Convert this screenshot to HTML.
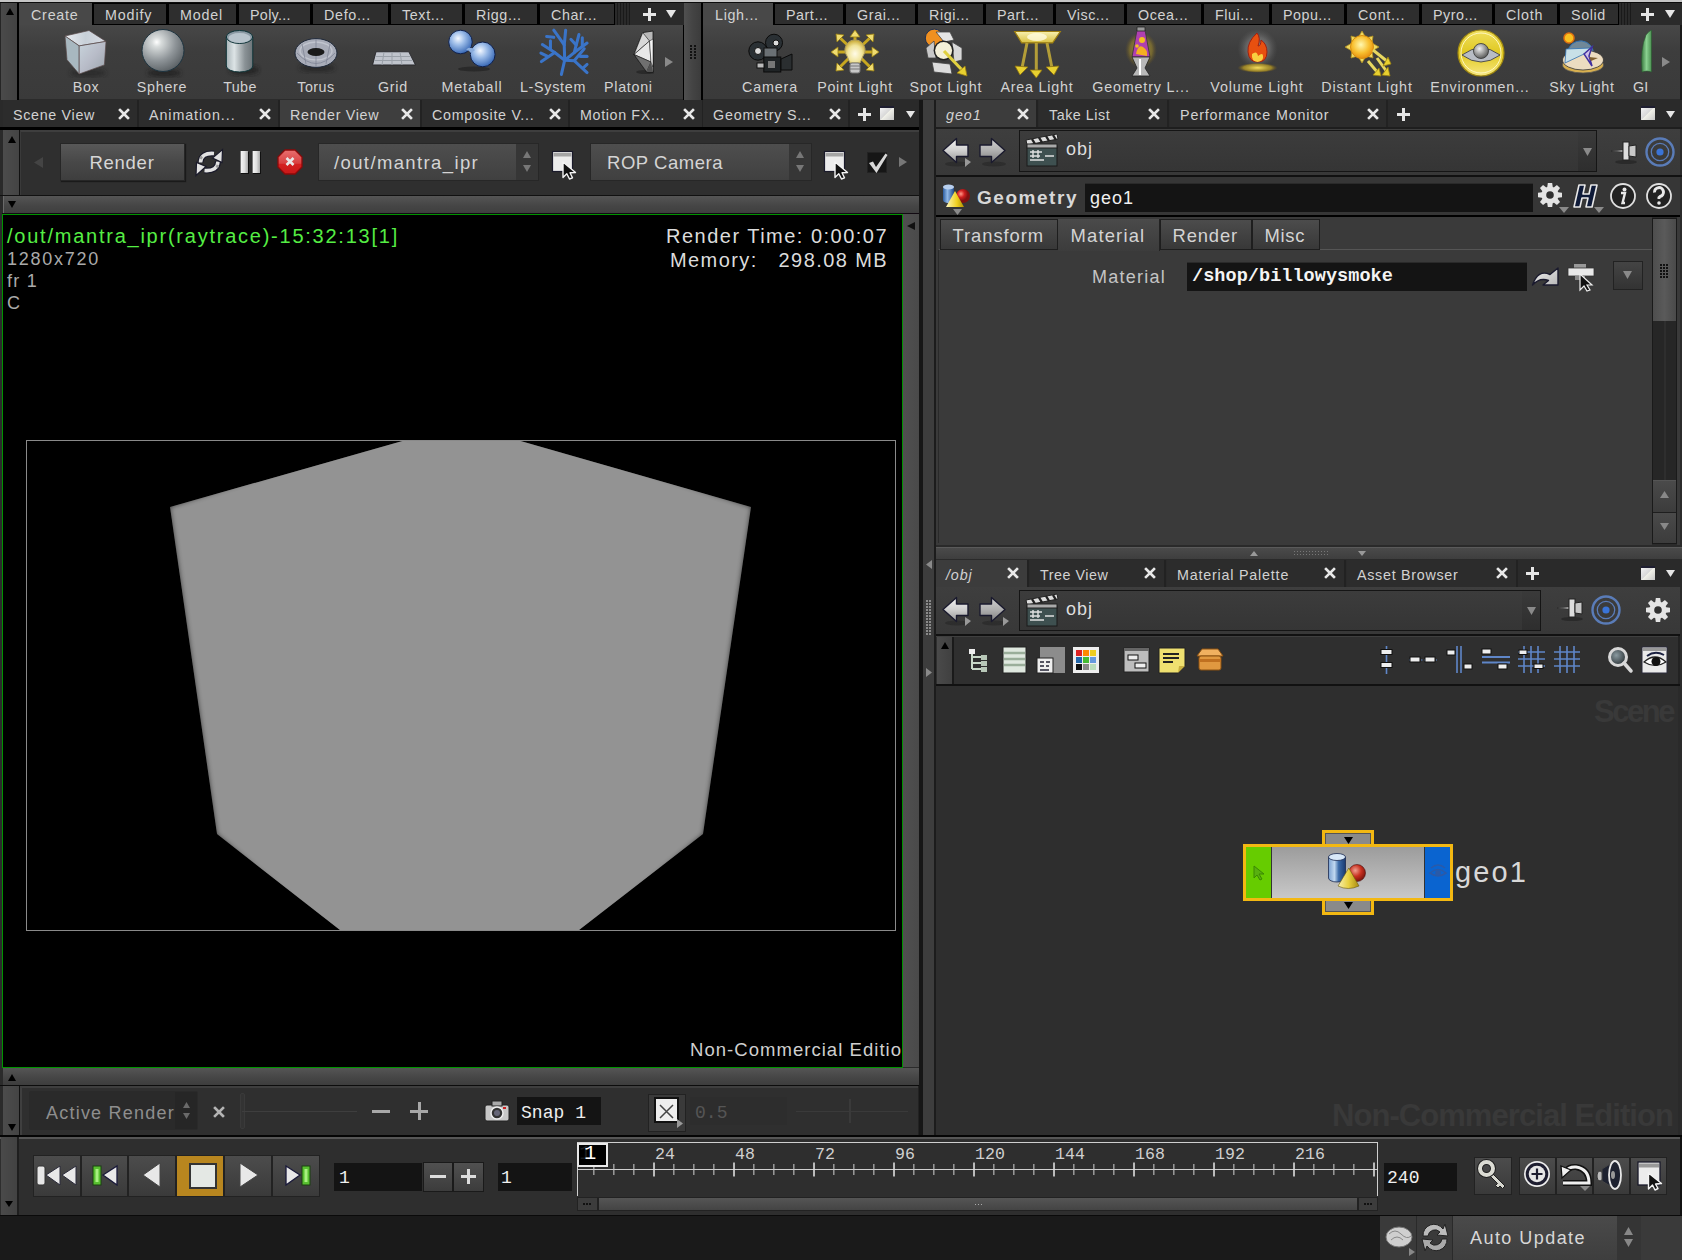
<!DOCTYPE html>
<html><head><meta charset="utf-8"><style>
*{box-sizing:border-box}
html,body{margin:0;padding:0}
body{width:1682px;height:1260px;background:#2b2b2b;position:relative;overflow:hidden;font-family:"Liberation Sans",sans-serif;color:#d2d2d2}
.a{position:absolute}
.t{position:absolute;white-space:nowrap;line-height:1;letter-spacing:0.055em}
</style></head><body>
<div class="a" style="left:0px;top:0px;width:1682px;height:2px;background:#c6c6c6"></div>
<div class="a" style="left:0px;top:2px;width:1682px;height:1px;background:#0c0c0c"></div>
<div class="a" style="left:0px;top:3px;width:1px;height:97px;background:#262626"></div>
<div class="a" style="left:1px;top:3px;width:16px;height:97px;background:linear-gradient(90deg,#4a4a4a,#424242)"></div>
<svg class="a" style="left:6px;top:8px;" width="8" height="7" viewBox="0 0 8 7"><polygon points="0,7 8,7 4.0,0" fill="#000"/></svg>
<div class="a" style="left:17px;top:3px;width:2px;height:97px;background:#000"></div>
<div class="a" style="left:19px;top:3px;width:665px;height:22px;background:#2a2a2a"></div>
<div class="a" style="left:19px;top:25px;width:665px;height:74px;background:linear-gradient(#474747,#3d3d3d 35%,#3a3a3a)"></div>
<div class="a" style="left:19px;top:3px;width:73px;height:22px;background:#484848"></div>
<div class="t" style="left:31px;top:7.9px;font-size:14.3px;color:#d2d2d2;letter-spacing:0.77px;">Create</div>
<div class="a" style="left:92px;top:3px;width:75px;height:22px;background:#2e2e2e;border:1px solid #000;border-left:2px solid #000"></div>
<div class="t" style="left:105px;top:7.9px;font-size:14.3px;color:#d2d2d2;letter-spacing:0.88px;">Modify</div>
<div class="a" style="left:167px;top:3px;width:70px;height:22px;background:#2e2e2e;border:1px solid #000;border-left:2px solid #000"></div>
<div class="t" style="left:180px;top:7.9px;font-size:14.3px;color:#d2d2d2;letter-spacing:0.79px;">Model</div>
<div class="a" style="left:237px;top:3px;width:74px;height:22px;background:#2e2e2e;border:1px solid #000;border-left:2px solid #000"></div>
<div class="t" style="left:250px;top:7.9px;font-size:14.3px;color:#d2d2d2;letter-spacing:0.32px;">Poly...</div>
<div class="a" style="left:311px;top:3px;width:78px;height:22px;background:#2e2e2e;border:1px solid #000;border-left:2px solid #000"></div>
<div class="t" style="left:324px;top:7.9px;font-size:14.3px;color:#d2d2d2;letter-spacing:0.69px;">Defo...</div>
<div class="a" style="left:389px;top:3px;width:74px;height:22px;background:#2e2e2e;border:1px solid #000;border-left:2px solid #000"></div>
<div class="t" style="left:402px;top:7.9px;font-size:14.3px;color:#d2d2d2;letter-spacing:0.63px;">Text...</div>
<div class="a" style="left:463px;top:3px;width:75px;height:22px;background:#2e2e2e;border:1px solid #000;border-left:2px solid #000"></div>
<div class="t" style="left:476px;top:7.9px;font-size:14.3px;color:#d2d2d2;letter-spacing:0.62px;">Rigg...</div>
<div class="a" style="left:538px;top:3px;width:77px;height:22px;background:#2e2e2e;border:1px solid #000;border-left:2px solid #000"></div>
<div class="t" style="left:551px;top:7.9px;font-size:14.3px;color:#d2d2d2;letter-spacing:0.56px;">Char...</div>
<div class="a" style="left:617px;top:3px;width:1px;height:22px;background:#1a1a1a"></div>
<div class="a" style="left:620px;top:3px;width:1px;height:22px;background:#1a1a1a"></div>
<div class="a" style="left:623px;top:3px;width:1px;height:22px;background:#1a1a1a"></div>
<div class="a" style="left:626px;top:3px;width:1px;height:22px;background:#1a1a1a"></div>
<div class="a" style="left:629px;top:3px;width:1px;height:22px;background:#1a1a1a"></div>
<div class="a" style="left:643px;top:13px;width:13px;height:3px;background:#e6e6e6"></div>
<div class="a" style="left:648px;top:8px;width:3px;height:13px;background:#e6e6e6"></div>
<svg class="a" style="left:666px;top:10px;" width="10" height="8" viewBox="0 0 10 8"><polygon points="0,0 10,0 5.0,8" fill="#e6e6e6"/></svg>
<div class="a" style="left:683px;top:25px;width:1px;height:75px;background:#000"></div>
<div class="a" style="left:684px;top:3px;width:17px;height:97px;background:linear-gradient(90deg,#505050,#444 50%,#3c3c3c)"></div>
<div class="a" style="left:690px;top:45px;width:2px;height:2px;background:#111"></div>
<div class="a" style="left:694px;top:45px;width:2px;height:2px;background:#111"></div>
<div class="a" style="left:690px;top:48px;width:2px;height:2px;background:#111"></div>
<div class="a" style="left:694px;top:48px;width:2px;height:2px;background:#111"></div>
<div class="a" style="left:690px;top:51px;width:2px;height:2px;background:#111"></div>
<div class="a" style="left:694px;top:51px;width:2px;height:2px;background:#111"></div>
<div class="a" style="left:690px;top:54px;width:2px;height:2px;background:#111"></div>
<div class="a" style="left:694px;top:54px;width:2px;height:2px;background:#111"></div>
<div class="a" style="left:690px;top:57px;width:2px;height:2px;background:#111"></div>
<div class="a" style="left:694px;top:57px;width:2px;height:2px;background:#111"></div>
<div class="a" style="left:701px;top:3px;width:2px;height:97px;background:#000"></div>
<svg class="a" style="left:665px;top:57px;" width="8" height="10" viewBox="0 0 8 10"><polygon points="0,0 8,5.0 0,10" fill="#8a8a8a"/></svg>
<div class="a" style="left:703px;top:3px;width:979px;height:22px;background:#2a2a2a"></div>
<div class="a" style="left:703px;top:25px;width:977px;height:74px;background:linear-gradient(#474747,#3d3d3d 35%,#3a3a3a)"></div>
<div class="a" style="left:703px;top:3px;width:70px;height:22px;background:#484848"></div>
<div class="t" style="left:715px;top:7.9px;font-size:14.3px;color:#d2d2d2;letter-spacing:0.68px;">Ligh...</div>
<div class="a" style="left:773px;top:3px;width:71px;height:22px;background:#2e2e2e;border:1px solid #000;border-left:2px solid #000"></div>
<div class="t" style="left:786px;top:7.9px;font-size:14.3px;color:#d2d2d2;letter-spacing:0.54px;">Part...</div>
<div class="a" style="left:844px;top:3px;width:72px;height:22px;background:#2e2e2e;border:1px solid #000;border-left:2px solid #000"></div>
<div class="t" style="left:857px;top:7.9px;font-size:14.3px;color:#d2d2d2;letter-spacing:0.63px;">Grai...</div>
<div class="a" style="left:916px;top:3px;width:68px;height:22px;background:#2e2e2e;border:1px solid #000;border-left:2px solid #000"></div>
<div class="t" style="left:929px;top:7.9px;font-size:14.3px;color:#d2d2d2;letter-spacing:0.58px;">Rigi...</div>
<div class="a" style="left:984px;top:3px;width:70px;height:22px;background:#2e2e2e;border:1px solid #000;border-left:2px solid #000"></div>
<div class="t" style="left:997px;top:7.9px;font-size:14.3px;color:#d2d2d2;letter-spacing:0.54px;">Part...</div>
<div class="a" style="left:1054px;top:3px;width:71px;height:22px;background:#2e2e2e;border:1px solid #000;border-left:2px solid #000"></div>
<div class="t" style="left:1067px;top:7.9px;font-size:14.3px;color:#d2d2d2;letter-spacing:0.53px;">Visc...</div>
<div class="a" style="left:1125px;top:3px;width:77px;height:22px;background:#2e2e2e;border:1px solid #000;border-left:2px solid #000"></div>
<div class="t" style="left:1138px;top:7.9px;font-size:14.3px;color:#d2d2d2;letter-spacing:0.60px;">Ocea...</div>
<div class="a" style="left:1202px;top:3px;width:68px;height:22px;background:#2e2e2e;border:1px solid #000;border-left:2px solid #000"></div>
<div class="t" style="left:1215px;top:7.9px;font-size:14.3px;color:#d2d2d2;letter-spacing:0.56px;">Flui...</div>
<div class="a" style="left:1270px;top:3px;width:75px;height:22px;background:#2e2e2e;border:1px solid #000;border-left:2px solid #000"></div>
<div class="t" style="left:1283px;top:7.9px;font-size:14.3px;color:#d2d2d2;letter-spacing:0.48px;">Popu...</div>
<div class="a" style="left:1345px;top:3px;width:75px;height:22px;background:#2e2e2e;border:1px solid #000;border-left:2px solid #000"></div>
<div class="t" style="left:1358px;top:7.9px;font-size:14.3px;color:#d2d2d2;letter-spacing:0.71px;">Cont...</div>
<div class="a" style="left:1420px;top:3px;width:73px;height:22px;background:#2e2e2e;border:1px solid #000;border-left:2px solid #000"></div>
<div class="t" style="left:1433px;top:7.9px;font-size:14.3px;color:#d2d2d2;letter-spacing:0.50px;">Pyro...</div>
<div class="a" style="left:1493px;top:3px;width:65px;height:22px;background:#2e2e2e;border:1px solid #000;border-left:2px solid #000"></div>
<div class="t" style="left:1506px;top:7.9px;font-size:14.3px;color:#d2d2d2;letter-spacing:0.80px;">Cloth</div>
<div class="a" style="left:1558px;top:3px;width:61px;height:22px;background:#2e2e2e;border:1px solid #000;border-left:2px solid #000"></div>
<div class="t" style="left:1571px;top:7.9px;font-size:14.3px;color:#d2d2d2;letter-spacing:0.61px;">Solid</div>
<div class="a" style="left:1621px;top:3px;width:1px;height:22px;background:#1a1a1a"></div>
<div class="a" style="left:1624px;top:3px;width:1px;height:22px;background:#1a1a1a"></div>
<div class="a" style="left:1627px;top:3px;width:1px;height:22px;background:#1a1a1a"></div>
<div class="a" style="left:1630px;top:3px;width:1px;height:22px;background:#1a1a1a"></div>
<div class="a" style="left:1641px;top:13px;width:13px;height:3px;background:#e6e6e6"></div>
<div class="a" style="left:1646px;top:8px;width:3px;height:13px;background:#e6e6e6"></div>
<svg class="a" style="left:1665px;top:10px;" width="10" height="8" viewBox="0 0 10 8"><polygon points="0,0 10,0 5.0,8" fill="#e6e6e6"/></svg>
<div class="a" style="left:1680px;top:25px;width:2px;height:75px;background:#1a1a1a"></div>
<svg class="a" style="left:1662px;top:57px;" width="8" height="10" viewBox="0 0 8 10"><polygon points="0,0 8,5.0 0,10" fill="#8a8a8a"/></svg>
<div class="t" style="left:-114px;width:400px;text-align:center;top:79.9px;font-size:14.3px;color:#d2d2d2;letter-spacing:0.65px;">Box</div>
<div class="t" style="left:-38px;width:400px;text-align:center;top:79.9px;font-size:14.3px;color:#d2d2d2;letter-spacing:0.71px;">Sphere</div>
<div class="t" style="left:40px;width:400px;text-align:center;top:79.9px;font-size:14.3px;color:#d2d2d2;letter-spacing:0.36px;">Tube</div>
<div class="t" style="left:116px;width:400px;text-align:center;top:79.9px;font-size:14.3px;color:#d2d2d2;letter-spacing:0.49px;">Torus</div>
<div class="t" style="left:193px;width:400px;text-align:center;top:79.9px;font-size:14.3px;color:#d2d2d2;letter-spacing:0.75px;">Grid</div>
<div class="t" style="left:272px;width:400px;text-align:center;top:79.9px;font-size:14.3px;color:#d2d2d2;letter-spacing:0.90px;">Metaball</div>
<div class="t" style="left:353px;width:400px;text-align:center;top:79.9px;font-size:14.3px;color:#d2d2d2;letter-spacing:0.72px;">L-System</div>
<div class="t" style="left:604px;top:79.9px;font-size:14.3px;color:#d2d2d2;letter-spacing:0.72px;">Platoni</div>
<div class="t" style="left:570px;width:400px;text-align:center;top:79.9px;font-size:14.3px;color:#d2d2d2;letter-spacing:0.87px;">Camera</div>
<div class="t" style="left:655px;width:400px;text-align:center;top:79.9px;font-size:14.3px;color:#d2d2d2;letter-spacing:0.74px;">Point Light</div>
<div class="t" style="left:746px;width:400px;text-align:center;top:79.9px;font-size:14.3px;color:#d2d2d2;letter-spacing:0.84px;">Spot Light</div>
<div class="t" style="left:837px;width:400px;text-align:center;top:79.9px;font-size:14.3px;color:#d2d2d2;letter-spacing:0.80px;">Area Light</div>
<div class="t" style="left:941px;width:400px;text-align:center;top:79.9px;font-size:14.3px;color:#d2d2d2;letter-spacing:0.83px;">Geometry L...</div>
<div class="t" style="left:1057px;width:400px;text-align:center;top:79.9px;font-size:14.3px;color:#d2d2d2;letter-spacing:0.89px;">Volume Light</div>
<div class="t" style="left:1167px;width:400px;text-align:center;top:79.9px;font-size:14.3px;color:#d2d2d2;letter-spacing:0.94px;">Distant Light</div>
<div class="t" style="left:1280px;width:400px;text-align:center;top:79.9px;font-size:14.3px;color:#d2d2d2;letter-spacing:0.85px;">Environmen...</div>
<div class="t" style="left:1382px;width:400px;text-align:center;top:79.9px;font-size:14.3px;color:#d2d2d2;letter-spacing:0.75px;">Sky Light</div>
<div class="t" style="left:1633px;top:79.9px;font-size:14.3px;color:#d2d2d2;letter-spacing:0.11px;">GI</div>
<svg width="0" height="0" style="position:absolute"><defs>
<linearGradient id="gBox" x1="0" y1="0" x2="1" y2="1"><stop offset="0" stop-color="#c8d4dc"/><stop offset=".5" stop-color="#b8bcc8"/><stop offset="1" stop-color="#9aa4ac"/></linearGradient>
<linearGradient id="gBoxT" x1="0" y1="0" x2="1" y2="0"><stop offset="0" stop-color="#e8ecf0"/><stop offset=".5" stop-color="#c8d0d8"/><stop offset="1" stop-color="#d8dce4"/></linearGradient>
<radialGradient id="gSph" cx=".35" cy=".3" r=".75"><stop offset="0" stop-color="#ffffff"/><stop offset=".15" stop-color="#d8dcdc"/><stop offset=".6" stop-color="#8e9498"/><stop offset="1" stop-color="#5a6064"/></radialGradient>
<linearGradient id="gTube" x1="0" x2="1"><stop offset="0" stop-color="#a8b4b8"/><stop offset=".3" stop-color="#dde4e6"/><stop offset=".7" stop-color="#8a9296"/><stop offset="1" stop-color="#6c7478"/></linearGradient>
<radialGradient id="gMeta" cx=".4" cy=".35" r=".7"><stop offset="0" stop-color="#f4f8ff"/><stop offset=".4" stop-color="#9cbce8"/><stop offset="1" stop-color="#2e60b0"/></radialGradient>
<radialGradient id="gBulb" cx=".5" cy=".6" r=".6"><stop offset="0" stop-color="#fffbe8"/><stop offset=".6" stop-color="#f0e49a"/><stop offset="1" stop-color="#c8a830"/></radialGradient>
<radialGradient id="gSun" cx=".45" cy=".4" r=".6"><stop offset="0" stop-color="#fff8b0"/><stop offset=".6" stop-color="#f8c030"/><stop offset="1" stop-color="#e89010"/></radialGradient>
<radialGradient id="gGlow" cx=".5" cy=".5" r=".5"><stop offset="0" stop-color="#d0d0d0" stop-opacity=".9"/><stop offset=".6" stop-color="#a0a0a0" stop-opacity=".5"/><stop offset="1" stop-color="#707070" stop-opacity="0"/></radialGradient>
<radialGradient id="gYel" cx=".5" cy=".5" r=".5"><stop offset="0" stop-color="#f8e060"/><stop offset=".7" stop-color="#c0a020" stop-opacity=".7"/><stop offset="1" stop-color="#806010" stop-opacity="0"/></radialGradient>
<linearGradient id="gEnv" x1="0" y1="0" x2="0" y2="1"><stop offset="0" stop-color="#f0e060"/><stop offset=".5" stop-color="#e0c820"/><stop offset="1" stop-color="#f8e880"/></linearGradient>
<radialGradient id="gGray" cx=".4" cy=".35" r=".7"><stop offset="0" stop-color="#f0f0f0"/><stop offset=".5" stop-color="#a0a0a0"/><stop offset="1" stop-color="#505050"/></radialGradient>
<linearGradient id="gArea" x1="0" y1="0" x2="0" y2="1"><stop offset="0" stop-color="#f8f0b0"/><stop offset="1" stop-color="#d8c040"/></linearGradient>
<linearGradient id="gGreen" x1="0" x2="1"><stop offset="0" stop-color="#3a7a40"/><stop offset=".5" stop-color="#8ad090"/><stop offset="1" stop-color="#4a9050"/></linearGradient>
<filter id="fsh" x="-20%" y="-20%" width="140%" height="140%"><feGaussianBlur stdDeviation="2"/></filter>
</defs></svg>
<svg class="a" style="left:60px;top:26px;" width="52" height="52" viewBox="0 0 52 52"><ellipse cx="28" cy="47" rx="18" ry="4" fill="#222" opacity=".6" filter="url(#fsh)"/><polygon points="5,10 29,4.5 46,15.4 19.2,19.9" fill="url(#gBoxT)" stroke="#5a4a4a" stroke-width=".7"/><polygon points="5,10 19.2,19.9 19.2,48 7,33.7" fill="#a8b8c0" stroke="#5a4a4a" stroke-width=".7"/><polygon points="19.2,19.9 46,15.4 44.4,38.9 19.2,48" fill="url(#gBox)" stroke="#5a4a4a" stroke-width=".7"/></svg>
<svg class="a" style="left:138px;top:26px;" width="50" height="52" viewBox="0 0 50 52"><ellipse cx="26" cy="47" rx="17" ry="4" fill="#1e1e1e" opacity=".7" filter="url(#fsh)"/><circle cx="25" cy="24.5" r="21" fill="url(#gSph)" stroke="#1e3440" stroke-width="1"/></svg>
<svg class="a" style="left:222px;top:26px;" width="40" height="52" viewBox="0 0 40 52"><ellipse cx="22" cy="44" rx="15" ry="5" fill="#1e1e1e" opacity=".7" filter="url(#fsh)"/><path d="M4.3 11 L4.3 40 A13.2 6 0 0 0 30.8 40 L30.8 11 Z" fill="url(#gTube)" stroke="#0e3438" stroke-width="1"/><ellipse cx="17.5" cy="11" rx="13.2" ry="6.5" fill="#8c9aa4" stroke="#0e3438" stroke-width="1"/><ellipse cx="17.5" cy="12" rx="11" ry="5" fill="#b8c4cc"/></svg>
<svg class="a" style="left:292px;top:34px;" width="48" height="40" viewBox="0 0 48 40"><ellipse cx="25" cy="34" rx="18" ry="4" fill="#1e1e1e" opacity=".6" filter="url(#fsh)"/><ellipse cx="24" cy="19" rx="21" ry="14.4" fill="#a8acb8" stroke="#1e2838" stroke-width="1"/><ellipse cx="24" cy="17" rx="16" ry="9" fill="none" stroke="#d0d4dc" stroke-width="1.5" opacity=".6"/><path d="M5 19 Q24 40 43 19 M10 10 L14 30 M24 5 L24 33 M38 10 L34 30" stroke="#7a8090" stroke-width=".7" fill="none"/><ellipse cx="24" cy="18" rx="8.5" ry="4" fill="#1a1a1a"/></svg>
<svg class="a" style="left:370px;top:48px;" width="48" height="20" viewBox="0 0 48 20"><polygon points="6,3.8 38.8,3.8 45.4,16.9 2.6,16.9" fill="#c0c4cc" stroke="#1e1e22" stroke-width=".8"/><path d="M5 8.5 H40 M4 12.5 H43 M14 4 L12 17 M22 4 L22 17 M30 4 L32 17" stroke="#9aa0a8" stroke-width="1"/></svg>
<svg class="a" style="left:446px;top:28px;" width="52" height="44" viewBox="0 0 52 44"><ellipse cx="28" cy="41" rx="16" ry="2.5" fill="#1e1e1e" opacity=".6"/><circle cx="14.5" cy="14" r="11.8" fill="url(#gMeta)" stroke="#10204a" stroke-width="1"/><circle cx="36.7" cy="26.4" r="12.4" fill="url(#gMeta)" stroke="#10204a" stroke-width="1"/><path d="M22 20 Q26 19 29 22 L25 25 Q23 22 20 22Z" fill="#8aacdc"/></svg>
<svg class="a" style="left:530px;top:25px;" width="60" height="54" viewBox="0 0 60 54"><g transform="scale(0.0951)" stroke="#3a74c8" stroke-width="32" stroke-linecap="round" fill="none"><path d="M330 520 L365 370 L360 210 L375 55"/><path d="M360 210 L250 55"/><path d="M250 130 L175 120"/><path d="M365 370 L260 290 L130 205"/><path d="M215 250 L215 165"/><path d="M260 290 L120 385"/><path d="M185 330 L115 295"/><path d="M365 370 L465 290 L515 100"/><path d="M485 210 L430 150"/><path d="M465 290 L600 190"/><path d="M550 225 L550 135"/><path d="M365 370 L465 375 L600 500"/><path d="M465 375 L570 250"/><path d="M530 330 L600 330"/><path d="M560 450 L600 415"/></g></svg>
<svg class="a" style="left:632px;top:29px;" width="22" height="46" viewBox="0 0 22 46"><ellipse cx="14" cy="43" rx="10" ry="2" fill="#1e1e1e" opacity=".6"/><polygon points="2,25.5 10.7,3.6 21,2 21,43 14.6,43" fill="#b8b8b8" stroke="#111" stroke-width=".8"/><polygon points="2,25.5 10.7,3.6 17.5,12" fill="#d8d8d8" stroke="#111" stroke-width=".6"/><polygon points="2,25.5 17.5,12 19,33" fill="#e8e8e8" stroke="#111" stroke-width=".6"/><polygon points="2,25.5 19,33 14.6,43" fill="#707070" stroke="#111" stroke-width=".6"/><polygon points="19,33 21,43 14.6,43" fill="#505050"/><polygon points="17.5,12 21,10 21,38 19,33" fill="#f4f4f4" stroke="#111" stroke-width=".5"/></svg>
<svg class="a" style="left:746px;top:32px;" width="50" height="44" viewBox="0 0 50 44"><circle cx="12" cy="19" r="9.2" fill="#2a3034" stroke="#0a0a0a"/><circle cx="12" cy="19" r="3.5" fill="#ddd" stroke="#111"/><circle cx="28" cy="10.7" r="8.5" fill="#2a3034" stroke="#0a0a0a"/><circle cx="30" cy="11" r="3" fill="#ddd" stroke="#111"/><rect x="18" y="16" width="13" height="11" fill="#6a7074" stroke="#111"/><rect x="17.8" y="25" width="17" height="15" fill="#202426" stroke="#0a0a0a"/><rect x="22" y="29" width="7" height="7" fill="#777"/><polygon points="35,27 46,22 46,38 35,38" fill="#2a2e30" stroke="#0a0a0a"/><rect x="11" y="31" width="7" height="5" fill="#bbb" stroke="#111"/></svg>
<svg class="a" style="left:830px;top:29px;" width="50" height="48" viewBox="0 0 50 48"><g stroke="#c8a820" stroke-width="3" fill="#f4e080"><path d="M25 23 V6"/><path d="M25 23 H5"/><path d="M25 23 H45"/><path d="M25 23 L9 8"/><path d="M25 23 L41 8"/><path d="M25 23 L9 39"/><path d="M25 23 L41 39"/></g><g fill="#f0dc70" stroke="#9a8010" stroke-width=".8"><polygon points="25,1 20,8 30,8"/><polygon points="1,23 8,18 8,28"/><polygon points="49,23 42,18 42,28"/><polygon points="6,5 14,6 7,13"/><polygon points="44,5 36,6 43,13"/><polygon points="6,42 7,34 14,41"/><polygon points="44,42 43,34 36,41"/></g><path d="M25 11 A10 10 0 0 1 33 27 L30 34 H20 L17 27 A10 10 0 0 1 25 11Z" fill="url(#gBulb)" stroke="#b0a060" stroke-width="1"/><rect x="20" y="34" width="10" height="10" rx="2" fill="#c8c8c8" stroke="#777"/><path d="M20 37h10M20 40h10" stroke="#777"/></svg>
<svg class="a" style="left:922px;top:28px;" width="48" height="50" viewBox="0 0 48 50"><circle cx="12.3" cy="10.1" r="9" fill="#f09020" stroke="#203050" stroke-width="1"/><polygon points="14,4 28,4 32,12 22,14" fill="#e4e4e4" stroke="#444" stroke-width=".8"/><polygon points="4,20 12,13 14,30 6,30" fill="#c8c8c8" stroke="#444" stroke-width=".8"/><polygon points="30,14 40,20 40,32 32,34" fill="#d8d8d8" stroke="#444" stroke-width=".8"/><polygon points="10,34 28,36 30,46 12,44" fill="#dcdcdc" stroke="#444" stroke-width=".8"/><circle cx="21.6" cy="22.5" r="10" fill="#222"/><circle cx="21.6" cy="22.5" r="8.5" fill="#f4f0d8"/><path d="M22 23 L41 43" stroke="#e0d040" stroke-width="3.2"/><polygon points="45,48 35,45 43,38" fill="#e8d030" stroke="#9a8010" stroke-width=".8"/></svg>
<svg class="a" style="left:1010px;top:28px;" width="56" height="50" viewBox="0 0 56 50"><polygon points="4.7,3.5 50.3,3.5 42.6,14.8 11.7,14.8" fill="url(#gArea)" stroke="#a08010" stroke-width="1.2"/><ellipse cx="27" cy="9" rx="10" ry="4" fill="#fffbe0" opacity=".8"/><g stroke="#c0a838" stroke-width="3" opacity=".9"><path d="M17 15 L12 40"/><path d="M26.3 15 L26.3 44"/><path d="M37 15 L42 40"/></g><g fill="#e8d030" stroke="#8a7010" stroke-width=".8"><polygon points="5,38 18,39 10,47"/><polygon points="20,42 32,42 26.3,50"/><polygon points="36,39 49,38 44,47"/></g></svg>
<svg class="a" style="left:1118px;top:26px;" width="46" height="52" viewBox="0 0 46 52"><ellipse cx="23" cy="24" rx="16" ry="18" fill="url(#gYel)" opacity=".6"/><polygon points="19,4 27,4 32,31 14,31" fill="#b040b0" stroke="#333" stroke-width=".8"/><circle cx="24" cy="14" r="3" fill="#f4c020"/><path d="M18 28 Q20 18 25 21 Q30 24 29 30Z" fill="#f4b020"/><circle cx="19" cy="20" r="1.8" fill="#f4c020"/><polygon points="19,1 27,1 27,5 19,5" fill="#999" stroke="#222" stroke-width=".8"/><polygon points="14,31 32,31 27,42 32,50 14,50 19,42" fill="#b8b8b8" stroke="#222" stroke-width=".8"/><path d="M22 33 L22 49" stroke="#fff" stroke-width="2"/></svg>
<svg class="a" style="left:1235px;top:28px;" width="46" height="46" viewBox="0 0 46 46"><circle cx="22.5" cy="20.8" r="20" fill="url(#gGlow)" opacity=".7"/><ellipse cx="22.5" cy="39.8" rx="20" ry="5" fill="url(#gYel)"/><path d="M22 5 Q12 14 13 24 Q14 34 22.5 34 Q32 34 32 24 Q32 16 26 12 Q26 18 23 18 Q26 10 22 5Z" fill="#e85010" stroke="#a02010" stroke-width="1"/><path d="M22.5 34 Q16 33 17 26 Q22 22 23 28 Q28 24 28 28 Q29 33 22.5 34Z" fill="#f8d040"/></svg>
<svg class="a" style="left:1340px;top:26px;" width="54" height="52" viewBox="0 0 54 52"><polygon points="22,2 26,9 33,7 32,14 39,18 32,22 33,29 26,27 22,34 18,27 11,29 12,22 5,18 12,14 11,7 18,9" fill="#f0d860" stroke="#b09020" stroke-width=".8" transform="translate(0,3)"/><circle cx="22" cy="21" r="11.5" fill="url(#gSun)" stroke="#d89010" stroke-width="1"/><g stroke="#e8d860" stroke-width="3"><path d="M33 24 L48 36"/><path d="M28 35 L38 47"/><path d="M37 32 L47 46"/></g><g fill="#e8d030" stroke="#9a8010" stroke-width=".8"><polygon points="51,38 43,40 48,31"/><polygon points="41,50 33,49 39,42"/><polygon points="50,50 42,49 48,41"/></g></svg>
<svg class="a" style="left:1457px;top:29px;" width="48" height="48" viewBox="0 0 48 48"><circle cx="24" cy="24" r="23" fill="url(#gEnv)" stroke="#a08810" stroke-width="1.2"/><circle cx="24" cy="24" r="20" fill="none" stroke="#fff8c0" stroke-width="1"/><path d="M5 26 Q24 12 43 26 Q24 40 5 26Z" fill="#b8bcc4" stroke="#333" stroke-width=".8"/><circle cx="24" cy="22" r="7.5" fill="url(#gGray)" stroke="#333" stroke-width=".8"/></svg>
<svg class="a" style="left:1558px;top:28px;" width="50" height="48" viewBox="0 0 50 48"><path d="M10 30 A13 13 0 0 1 35 22 L35 30Z" fill="#708898" stroke="#3070b0"/><circle cx="11" cy="10" r="5" fill="#f8c020" stroke="#e07010" stroke-width="1.5"/><ellipse cx="25" cy="37" rx="20.5" ry="8" fill="#d8b050" stroke="#555" stroke-width=".8"/><ellipse cx="25" cy="32" rx="20.5" ry="10" fill="#ecdcc0" stroke="#333" stroke-width=".8"/><polygon points="7,35 8,21 33,20 26,26" fill="#c8e0e8" stroke="#3070b0" stroke-width=".8"/><polygon points="26,26 34,19 31,28 34,38" fill="#d0c0e8" stroke="#4030a0" stroke-width="1.5"/><polygon points="31,29 40,30 33,33" fill="#806030"/></svg>
<svg class="a" style="left:1638px;top:29px;" width="16" height="46" viewBox="0 0 16 46"><path d="M4 43 Q2 20 8 6 Q11 2 13.5 1 L13.5 43 Q9 41 4 43Z" fill="url(#gGreen)" stroke="#2a5a30" stroke-width=".6"/></svg>
<div class="a" style="left:0px;top:100px;width:919px;height:28px;background:#2a2a2a"></div>
<div class="a" style="left:3px;top:100px;width:134px;height:27px;background:#2c2c2c"></div>
<div class="a" style="left:137px;top:100px;width:2px;height:27px;background:#222"></div>
<div class="t" style="left:13px;top:107.9px;font-size:14.3px;color:#d2d2d2;letter-spacing:0.68px;">Scene View</div>
<svg class="a" style="left:118px;top:108px;" width="12" height="12" viewBox="0 0 12 12"><path d="M2 2L10 10M10 2L2 10" stroke="#e8e8e8" stroke-width="2.6" stroke-linecap="square"/></svg>
<div class="a" style="left:139px;top:100px;width:139px;height:27px;background:#2c2c2c"></div>
<div class="a" style="left:278px;top:100px;width:2px;height:27px;background:#222"></div>
<div class="t" style="left:149px;top:107.9px;font-size:14.3px;color:#d2d2d2;letter-spacing:0.92px;">Animation...</div>
<svg class="a" style="left:259px;top:108px;" width="12" height="12" viewBox="0 0 12 12"><path d="M2 2L10 10M10 2L2 10" stroke="#e8e8e8" stroke-width="2.6" stroke-linecap="square"/></svg>
<div class="a" style="left:280px;top:100px;width:140px;height:27px;background:#3e3e3e"></div>
<div class="a" style="left:420px;top:100px;width:2px;height:27px;background:#222"></div>
<div class="t" style="left:290px;top:107.9px;font-size:14.3px;color:#d2d2d2;letter-spacing:0.70px;">Render View</div>
<svg class="a" style="left:401px;top:108px;" width="12" height="12" viewBox="0 0 12 12"><path d="M2 2L10 10M10 2L2 10" stroke="#e8e8e8" stroke-width="2.6" stroke-linecap="square"/></svg>
<div class="a" style="left:422px;top:100px;width:146px;height:27px;background:#2c2c2c"></div>
<div class="a" style="left:568px;top:100px;width:2px;height:27px;background:#222"></div>
<div class="t" style="left:432px;top:107.9px;font-size:14.3px;color:#d2d2d2;letter-spacing:0.71px;">Composite V...</div>
<svg class="a" style="left:549px;top:108px;" width="12" height="12" viewBox="0 0 12 12"><path d="M2 2L10 10M10 2L2 10" stroke="#e8e8e8" stroke-width="2.6" stroke-linecap="square"/></svg>
<div class="a" style="left:570px;top:100px;width:132px;height:27px;background:#2c2c2c"></div>
<div class="a" style="left:702px;top:100px;width:2px;height:27px;background:#222"></div>
<div class="t" style="left:580px;top:107.9px;font-size:14.3px;color:#d2d2d2;letter-spacing:0.64px;">Motion FX...</div>
<svg class="a" style="left:683px;top:108px;" width="12" height="12" viewBox="0 0 12 12"><path d="M2 2L10 10M10 2L2 10" stroke="#e8e8e8" stroke-width="2.6" stroke-linecap="square"/></svg>
<div class="a" style="left:703px;top:100px;width:145px;height:27px;background:#2c2c2c"></div>
<div class="a" style="left:848px;top:100px;width:2px;height:27px;background:#222"></div>
<div class="t" style="left:713px;top:107.9px;font-size:14.3px;color:#d2d2d2;letter-spacing:0.80px;">Geometry S...</div>
<svg class="a" style="left:829px;top:108px;" width="12" height="12" viewBox="0 0 12 12"><path d="M2 2L10 10M10 2L2 10" stroke="#e8e8e8" stroke-width="2.6" stroke-linecap="square"/></svg>
<div class="a" style="left:858px;top:113px;width:13px;height:3px;background:#e6e6e6"></div>
<div class="a" style="left:863px;top:108px;width:3px;height:13px;background:#e6e6e6"></div>
<div class="a" style="left:880px;top:106px;width:14px;height:14px;background:linear-gradient(135deg,#f4f4f4,#d8d8d8 45%,#f0f0e8 50%,#c8c8c8);border-top:2px solid #1e1e30"></div>
<svg class="a" style="left:906px;top:111px;" width="9" height="7" viewBox="0 0 9 7"><polygon points="0,0 9,0 4.5,7" fill="#e6e6e6"/></svg>
<div class="a" style="left:0px;top:127px;width:919px;height:3px;background:#000"></div>
<div class="a" style="left:0px;top:130px;width:3px;height:66px;background:#2a2a2a"></div>
<div class="a" style="left:3px;top:130px;width:16px;height:65px;background:linear-gradient(90deg,#4c4c4c,#444)"></div>
<svg class="a" style="left:8px;top:136px;" width="8" height="7" viewBox="0 0 8 7"><polygon points="0,7 8,7 4.0,0" fill="#000"/></svg>
<div class="a" style="left:19px;top:130px;width:1px;height:65px;background:#111"></div>
<div class="a" style="left:20px;top:130px;width:899px;height:65px;background:#2f2f2f;border-top:2px solid #3e3e3e;border-left:1px solid #3a3a3a"></div>
<svg class="a" style="left:34px;top:157px;" width="9" height="11" viewBox="0 0 9 11"><polygon points="9,0 0,5.5 9,11" fill="#444"/></svg>
<div class="a" style="left:60px;top:143px;width:125px;height:38px;background:linear-gradient(#585858,#484848 50%,#3e3e3e);border:1px solid #262626;box-shadow:1px 1px 1px #1a1a1a"></div>
<div class="t" style="left:-78px;width:400px;text-align:center;top:154.3px;font-size:18.5px;color:#d6d6d6;letter-spacing:0.73px;">Render</div>
<svg class="a" style="left:195px;top:148px;" width="30" height="30" viewBox="0 0 30 30"><g fill="none"><path d="M5.5 14.5 Q6 4.5 19 5.5" stroke="#1a1a2a" stroke-width="6"/><path d="M23 13.5 Q22.5 23.5 9.5 22.5" stroke="#1a1a2a" stroke-width="6"/><path d="M5.5 14.5 Q6 4.5 19 5.5" stroke="#e2e2e2" stroke-width="3.6"/><path d="M23 13.5 Q22.5 23.5 9.5 22.5" stroke="#e2e2e2" stroke-width="3.6"/></g><polygon points="27.5,1.5 27,14.5 17.5,10" fill="#e2e2e2" stroke="#1a1a2a" stroke-width="1.2"/><polygon points="1,27.5 1.5,14.5 11,18.5" fill="#e2e2e2" stroke="#1a1a2a" stroke-width="1.2"/><path d="M5.5 11 Q6 9.5 7 8.5" stroke="#999" stroke-width="2.5" fill="none"/><path d="M23 17 Q22.5 18.5 21.5 19.5" stroke="#999" stroke-width="2.5" fill="none"/></svg>
<div class="a" style="left:241px;top:152px;width:8px;height:22px;background:#111;filter:blur(0.6px)"></div>
<div class="a" style="left:240px;top:151px;width:7.5px;height:22px;background:linear-gradient(90deg,#f4f4f4,#e0e0e0 50%,#a8a8a8);border-left:1px solid #777"></div>
<div class="a" style="left:253px;top:152px;width:8px;height:22px;background:#111;filter:blur(0.6px)"></div>
<div class="a" style="left:252px;top:151px;width:7.5px;height:22px;background:linear-gradient(90deg,#f4f4f4,#e0e0e0 50%,#a8a8a8);border-left:1px solid #777"></div>
<svg class="a" style="left:277px;top:148px;" width="27" height="28" viewBox="0 0 27 28"><polygon points="8,2 18,2 25,9 25,19 18,26 8,26 1,19 1,9" fill="url(#gstop)" stroke="#8a0a0a" stroke-width="1.3"/><defs><linearGradient id="gstop" x1="0" y1="0" x2="0" y2="1"><stop offset="0" stop-color="#e87070"/><stop offset=".55" stop-color="#d84040"/><stop offset=".6" stop-color="#d42020"/><stop offset="1" stop-color="#c81818"/></linearGradient></defs><path d="M9.5 10 L16.5 17 M16.5 10 L9.5 17" stroke="#e8e8e8" stroke-width="2.6"/></svg>
<div class="a" style="left:318px;top:143px;width:221px;height:38px;background:linear-gradient(#4e4e4e,#404040);border:1px solid #272727"></div>
<div class="a" style="left:516px;top:144px;width:22px;height:36px;background:#363636"></div>
<svg class="a" style="left:523px;top:151px;" width="8" height="7" viewBox="0 0 8 7"><polygon points="0,7 8,7 4.0,0" fill="#777"/></svg>
<svg class="a" style="left:523px;top:165px;" width="8" height="7" viewBox="0 0 8 7"><polygon points="0,0 8,0 4.0,7" fill="#777"/></svg>
<div class="t" style="left:334px;top:154.3px;font-size:18.5px;color:#d4d4d4;letter-spacing:1.38px;">/out/mantra_ipr</div>
<svg class="a" style="left:550px;top:149px;" width="30" height="32" viewBox="0 0 30 32"><rect x="2.5" y="2.5" width="20" height="20" fill="#ececec" stroke="#1a1a2a" stroke-width="1.2"/><rect x="3.5" y="4" width="18" height="3.5" fill="#a4a4a4"/><path d="M13 13 L13 28.5 L16.8 24.8 L19.5 30 L22.5 28.8 L20 23.8 L25.5 23.5 Z" fill="#111" stroke="#f4f4f4" stroke-width="1.4" stroke-linejoin="round"/></svg>
<div class="a" style="left:590px;top:143px;width:222px;height:38px;background:linear-gradient(#4e4e4e,#404040);border:1px solid #272727"></div>
<div class="a" style="left:789px;top:144px;width:22px;height:36px;background:#363636"></div>
<svg class="a" style="left:796px;top:151px;" width="8" height="7" viewBox="0 0 8 7"><polygon points="0,7 8,7 4.0,0" fill="#777"/></svg>
<svg class="a" style="left:796px;top:165px;" width="8" height="7" viewBox="0 0 8 7"><polygon points="0,0 8,0 4.0,7" fill="#777"/></svg>
<div class="t" style="left:607px;top:154.3px;font-size:18.5px;color:#d4d4d4;letter-spacing:0.53px;">ROP Camera</div>
<svg class="a" style="left:822px;top:149px;" width="30" height="32" viewBox="0 0 30 32"><rect x="2.5" y="2.5" width="20" height="20" fill="#ececec" stroke="#1a1a2a" stroke-width="1.2"/><rect x="3.5" y="4" width="18" height="3.5" fill="#a4a4a4"/><path d="M13 13 L13 28.5 L16.8 24.8 L19.5 30 L22.5 28.8 L20 23.8 L25.5 23.5 Z" fill="#111" stroke="#f4f4f4" stroke-width="1.4" stroke-linejoin="round"/></svg>
<div class="a" style="left:867px;top:152px;width:20px;height:21px;background:#161616;border:1px solid #222"></div>
<svg class="a" style="left:866px;top:151px;" width="24" height="24" viewBox="0 0 24 24"><path d="M3 12 L7 10.5 L10 16 L19.5 2.5 L21.5 4 L10.5 22 Z" fill="#d8d8d8"/></svg>
<svg class="a" style="left:899px;top:157px;" width="8" height="10" viewBox="0 0 8 10"><polygon points="0,0 8,5.0 0,10" fill="#777"/></svg>
<div class="a" style="left:0px;top:195px;width:919px;height:1px;background:#111"></div>
<div class="a" style="left:3px;top:196px;width:916px;height:17px;background:linear-gradient(#555,#454545 60%,#3f3f3f);border-left:1px solid #6a6a6a"></div>
<svg class="a" style="left:8px;top:201px;" width="8" height="7" viewBox="0 0 8 7"><polygon points="0,0 8,0 4.0,7" fill="#000"/></svg>
<div class="a" style="left:2px;top:213px;width:917px;height:1px;background:#120a12"></div>
<div class="a" style="left:2px;top:214px;width:901px;height:854px;background:#000;border:1px solid #009400"></div>
<div class="a" style="left:903px;top:214px;width:16px;height:853px;background:linear-gradient(90deg,#505050,#4a4a4a)"></div>
<svg class="a" style="left:907px;top:222px;" width="8" height="8" viewBox="0 0 8 8"><polygon points="8,0 0,4.0 8,8" fill="#111"/></svg>
<div class="t" style="left:7px;top:226.1px;font-size:20px;color:#55ee44;letter-spacing:1.76px;">/out/mantra_ipr(raytrace)-15:32:13[1]</div>
<div class="t" style="left:7px;top:249.8px;font-size:18px;color:#aaaaaa;letter-spacing:1.74px;">1280x720</div>
<div class="t" style="left:7px;top:271.8px;font-size:18px;color:#aaaaaa;letter-spacing:1.23px;">fr 1</div>
<div class="t" style="left:7px;top:293.8px;font-size:18px;color:#aaaaaa;letter-spacing:-0.44px;">C</div>
<div class="t" style="left:388px;width:500px;text-align:right;top:226.1px;font-size:20px;color:#dcdcdc;letter-spacing:1.48px;">Render Time: 0:00:07</div>
<div class="t" style="left:388px;width:500px;text-align:right;top:250.1px;font-size:20px;color:#dcdcdc;letter-spacing:1.41px;">Memory: &nbsp;&nbsp;298.08 MB</div>
<svg class="a" style="left:26px;top:440px;" width="870" height="491" viewBox="0 0 870 491"><defs><filter id="bl" x="-5%" y="-5%" width="110%" height="110%"><feGaussianBlur stdDeviation="2.8"/></filter><clipPath id="cubeclip"><polygon points="380,0 491,0 725,67 677,394 553,490 314,490 191,394 144,67"/></clipPath></defs><polygon points="380,0 491,0 725,67 677,394 553,490 314,490 191,394 144,67" fill="#3c3c3c"/><g clip-path="url(#cubeclip)"><polygon points="380,-10 491,-10 725,67 677,394 553,500 314,500 191,394 144,67" fill="#939393" filter="url(#bl)"/></g></svg>
<div class="a" style="left:26px;top:440px;width:870px;height:491px;border:1px solid #8a8a8a"></div>
<div class="t" style="left:690px;top:1041.3px;font-size:18.5px;color:#cfcfcf;letter-spacing:1.04px;">Non-Commercial Editio</div>
<div class="a" style="left:3px;top:1068px;width:916px;height:17px;background:linear-gradient(#555,#454545 60%,#3d3d3d)"></div>
<svg class="a" style="left:8px;top:1074px;" width="8" height="7" viewBox="0 0 8 7"><polygon points="0,7 8,7 4.0,0" fill="#000"/></svg>
<div class="a" style="left:0px;top:1085px;width:919px;height:1px;background:#0c0c0c"></div>
<div class="a" style="left:3px;top:1086px;width:16px;height:49px;background:linear-gradient(90deg,#4c4c4c,#444)"></div>
<svg class="a" style="left:8px;top:1124px;" width="8" height="7" viewBox="0 0 8 7"><polygon points="0,0 8,0 4.0,7" fill="#000"/></svg>
<div class="a" style="left:19px;top:1086px;width:1px;height:49px;background:#111"></div>
<div class="a" style="left:20px;top:1086px;width:899px;height:49px;background:#2f2f2f;border-top:2px solid #3e3e3e;border-left:2px solid #3f3f3f"></div>
<div class="a" style="left:29px;top:1091px;width:169px;height:39px;background:#2a2a2a;border-radius:2px"></div>
<div class="a" style="left:175px;top:1092px;width:22px;height:37px;background:#262626"></div>
<div class="t" style="left:46px;top:1103.8px;font-size:18px;color:#8e8e8e;letter-spacing:1.22px;">Active Render</div>
<svg class="a" style="left:183px;top:1102px;" width="7" height="6" viewBox="0 0 7 6"><polygon points="0,6 7,6 3.5,0" fill="#6a6a6a"/></svg>
<svg class="a" style="left:183px;top:1113px;" width="7" height="6" viewBox="0 0 7 6"><polygon points="0,0 7,0 3.5,6" fill="#6a6a6a"/></svg>
<svg class="a" style="left:213px;top:1106px;" width="12" height="12" viewBox="0 0 12 12"><path d="M2 2L10 10M10 2L2 10" stroke="#b4b4b4" stroke-width="2.6" stroke-linecap="square"/></svg>
<div class="a" style="left:240px;top:1093px;width:5px;height:36px;background:#333;border:1px solid #3a3a3a;border-radius:2px"></div>
<div class="a" style="left:242px;top:1111px;width:115px;height:1px;background:#3e3e3e"></div>
<div class="a" style="left:372px;top:1110px;width:18px;height:3px;background:#a8a8a8"></div>
<div class="a" style="left:410px;top:1110px;width:18px;height:3px;background:#a8a8a8"></div>
<div class="a" style="left:418px;top:1102px;width:3px;height:18px;background:#a8a8a8"></div>
<svg class="a" style="left:483px;top:1099px;" width="28" height="24" viewBox="0 0 28 24"><rect x="2" y="6" width="24" height="16" rx="2" fill="#c8c8c8" stroke="#222"/><rect x="9" y="2" width="10" height="5" fill="#aaa" stroke="#222"/><circle cx="14" cy="14" r="6" fill="#333" stroke="#eee" stroke-width="1.5"/><circle cx="14" cy="14" r="3" fill="#667"/><rect x="20" y="8" width="3" height="2" fill="#c22"/></svg>
<div class="a" style="left:517px;top:1097px;width:84px;height:28px;background:#141414"></div>
<div class="t" style="left:521px;top:1103.8px;font-size:18px;color:#eeeeee;letter-spacing:0.05px;font-family:'Liberation Mono',monospace;">Snap 1</div>
<div class="a" style="left:648px;top:1094px;width:38px;height:38px;background:#3a3a3a;border:1px solid #222"></div>
<div class="a" style="left:654px;top:1097px;width:25px;height:26px;background:#eee;border:2px solid #111"></div>
<svg class="a" style="left:677px;top:1119px;" width="6" height="9" viewBox="0 0 6 9"><polygon points="0,0 6,4.5 0,9" fill="#999"/></svg>
<svg class="a" style="left:655px;top:1100px;" width="23" height="23" viewBox="0 0 23 23"><path d="M5 5L18 18M18 5L5 18" stroke="#444" stroke-width="1.5"/></svg>
<div class="a" style="left:690px;top:1097px;width:97px;height:28px;background:#2d2d2d"></div>
<div class="t" style="left:695px;top:1103.8px;font-size:18px;color:#555555;letter-spacing:0.05px;font-family:'Liberation Mono',monospace;">0.5</div>
<div class="a" style="left:796px;top:1111px;width:112px;height:1px;background:#3a3a3a"></div>
<div class="a" style="left:849px;top:1099px;width:2px;height:24px;background:#3a3a3a"></div>
<div class="a" style="left:918px;top:1086px;width:1px;height:50px;background:#222"></div>
<div class="a" style="left:919px;top:100px;width:4px;height:1036px;background:#161616"></div>
<div class="a" style="left:923px;top:100px;width:11px;height:1036px;background:#3d3d3d"></div>
<div class="a" style="left:934px;top:100px;width:2px;height:1036px;background:#1c1c1c"></div>
<svg class="a" style="left:926px;top:560px;" width="6" height="9" viewBox="0 0 6 9"><polygon points="6,0 0,4.5 6,9" fill="#8a8a8a"/></svg>
<svg class="a" style="left:926px;top:668px;" width="6" height="9" viewBox="0 0 6 9"><polygon points="0,0 6,4.5 0,9" fill="#8a8a8a"/></svg>
<div class="a" style="left:926px;top:600px;width:1.5px;height:1.5px;background:#8a8a8a"></div>
<div class="a" style="left:929px;top:600px;width:1.5px;height:1.5px;background:#8a8a8a"></div>
<div class="a" style="left:926px;top:603px;width:1.5px;height:1.5px;background:#8a8a8a"></div>
<div class="a" style="left:929px;top:603px;width:1.5px;height:1.5px;background:#8a8a8a"></div>
<div class="a" style="left:926px;top:606px;width:1.5px;height:1.5px;background:#8a8a8a"></div>
<div class="a" style="left:929px;top:606px;width:1.5px;height:1.5px;background:#8a8a8a"></div>
<div class="a" style="left:926px;top:609px;width:1.5px;height:1.5px;background:#8a8a8a"></div>
<div class="a" style="left:929px;top:609px;width:1.5px;height:1.5px;background:#8a8a8a"></div>
<div class="a" style="left:926px;top:612px;width:1.5px;height:1.5px;background:#8a8a8a"></div>
<div class="a" style="left:929px;top:612px;width:1.5px;height:1.5px;background:#8a8a8a"></div>
<div class="a" style="left:926px;top:615px;width:1.5px;height:1.5px;background:#8a8a8a"></div>
<div class="a" style="left:929px;top:615px;width:1.5px;height:1.5px;background:#8a8a8a"></div>
<div class="a" style="left:926px;top:618px;width:1.5px;height:1.5px;background:#8a8a8a"></div>
<div class="a" style="left:929px;top:618px;width:1.5px;height:1.5px;background:#8a8a8a"></div>
<div class="a" style="left:926px;top:621px;width:1.5px;height:1.5px;background:#8a8a8a"></div>
<div class="a" style="left:929px;top:621px;width:1.5px;height:1.5px;background:#8a8a8a"></div>
<div class="a" style="left:926px;top:624px;width:1.5px;height:1.5px;background:#8a8a8a"></div>
<div class="a" style="left:929px;top:624px;width:1.5px;height:1.5px;background:#8a8a8a"></div>
<div class="a" style="left:926px;top:627px;width:1.5px;height:1.5px;background:#8a8a8a"></div>
<div class="a" style="left:929px;top:627px;width:1.5px;height:1.5px;background:#8a8a8a"></div>
<div class="a" style="left:926px;top:630px;width:1.5px;height:1.5px;background:#8a8a8a"></div>
<div class="a" style="left:929px;top:630px;width:1.5px;height:1.5px;background:#8a8a8a"></div>
<div class="a" style="left:926px;top:633px;width:1.5px;height:1.5px;background:#8a8a8a"></div>
<div class="a" style="left:929px;top:633px;width:1.5px;height:1.5px;background:#8a8a8a"></div>
<div class="a" style="left:936px;top:100px;width:746px;height:28px;background:#2a2a2a"></div>
<div class="a" style="left:936px;top:100px;width:100px;height:27px;background:#3c3c3c"></div>
<div class="a" style="left:1036px;top:100px;width:2px;height:27px;background:#222"></div>
<div class="t" style="left:946px;top:107.9px;font-size:14.3px;color:#d2d2d2;letter-spacing:0.98px;font-style:italic;">geo1</div>
<svg class="a" style="left:1017px;top:108px;" width="12" height="12" viewBox="0 0 12 12"><path d="M2 2L10 10M10 2L2 10" stroke="#e8e8e8" stroke-width="2.6" stroke-linecap="square"/></svg>
<div class="a" style="left:1039px;top:100px;width:128px;height:27px;background:#2c2c2c"></div>
<div class="a" style="left:1167px;top:100px;width:2px;height:27px;background:#222"></div>
<div class="t" style="left:1049px;top:107.9px;font-size:14.3px;color:#d2d2d2;letter-spacing:0.53px;">Take List</div>
<svg class="a" style="left:1148px;top:108px;" width="12" height="12" viewBox="0 0 12 12"><path d="M2 2L10 10M10 2L2 10" stroke="#e8e8e8" stroke-width="2.6" stroke-linecap="square"/></svg>
<div class="a" style="left:1170px;top:100px;width:216px;height:27px;background:#2c2c2c"></div>
<div class="a" style="left:1386px;top:100px;width:2px;height:27px;background:#222"></div>
<div class="t" style="left:1180px;top:107.9px;font-size:14.3px;color:#d2d2d2;letter-spacing:0.84px;">Performance Monitor</div>
<svg class="a" style="left:1367px;top:108px;" width="12" height="12" viewBox="0 0 12 12"><path d="M2 2L10 10M10 2L2 10" stroke="#e8e8e8" stroke-width="2.6" stroke-linecap="square"/></svg>
<div class="a" style="left:1397px;top:113px;width:13px;height:3px;background:#e6e6e6"></div>
<div class="a" style="left:1402px;top:108px;width:3px;height:13px;background:#e6e6e6"></div>
<div class="a" style="left:1641px;top:106px;width:14px;height:14px;background:linear-gradient(135deg,#f4f4f4,#d8d8d8 45%,#f0f0e8 50%,#c8c8c8);border-top:2px solid #1e1e30"></div>
<svg class="a" style="left:1666px;top:111px;" width="9" height="7" viewBox="0 0 9 7"><polygon points="0,0 9,0 4.5,7" fill="#e6e6e6"/></svg>
<div class="a" style="left:936px;top:127px;width:746px;height:2px;background:#1e1e1e"></div>
<div class="a" style="left:936px;top:129px;width:744px;height:46px;background:linear-gradient(#3e3e3e,#383838)"></div>
<svg class="a" style="left:942px;top:137px;" width="70" height="32" viewBox="0 0 70 32"><defs><linearGradient id="ga" x1="0" y1="0" x2="0" y2="1"><stop offset="0" stop-color="#f4f4f4"/><stop offset=".5" stop-color="#d0d0d0"/><stop offset="1" stop-color="#989898"/></linearGradient><linearGradient id="gb" x1="0" y1="0" x2="0" y2="1"><stop offset="0" stop-color="#d0d0d0"/><stop offset=".5" stop-color="#b0b0b0"/><stop offset="1" stop-color="#808080"/></linearGradient></defs><ellipse cx="15" cy="27" rx="12" ry="2.5" fill="#222" opacity=".5"/><ellipse cx="52" cy="27" rx="12" ry="2.5" fill="#222" opacity=".5"/><path d="M1 13.5 L14.5 1.5 L14.5 8 L26 8 L26 19.5 L14.5 19.5 L14.5 25.5 Z" fill="url(#ga)" stroke="#1a1a2e" stroke-width="1.4" stroke-linejoin="round"/><polygon points="23,21 29,25 23,30" fill="#999"/><path d="M63 13.5 L49.5 1.5 L49.5 8 L38 8 L38 19.5 L49.5 19.5 L49.5 25.5 Z" fill="url(#gb)" stroke="#1a1a2e" stroke-width="1.4" stroke-linejoin="round"/></svg>
<div class="a" style="left:1019px;top:130px;width:578px;height:42px;background:linear-gradient(#3c3c3c,#353535);border:1px solid #151515"></div>
<div class="a" style="left:1578px;top:131px;width:18px;height:40px;background:linear-gradient(#3a3a3a,#2e2e2e)"></div>
<svg class="a" style="left:1583px;top:148px;" width="9" height="8" viewBox="0 0 9 8"><polygon points="0,0 9,0 4.5,8" fill="#8a8a8a"/></svg>
<svg class="a" style="left:1025px;top:132px;" width="34" height="36" viewBox="0 0 34 36"><rect x="2" y="14" width="30" height="20" fill="#3e5050" stroke="#1a1a1a"/><path d="M5 20h12M5 24h10M5 28h14M8 18v8M13 18v8M20 24h9" stroke="#e0e0e0" stroke-width="1.4"/><polygon points="1,8 32,2 33,7 2,13" fill="#ddd" stroke="#222"/><path d="M7 7l3 5M14 5.5l3 5M21 4l3 5M28 3l3 5" stroke="#222" stroke-width="2.4"/><rect x="2" y="12" width="30" height="4" fill="#aaa" stroke="#222"/></svg>
<div class="t" style="left:1066px;top:139.8px;font-size:18px;color:#dedede;letter-spacing:0.99px;">obj</div>
<svg class="a" style="left:1609px;top:138px;" width="30" height="28" viewBox="0 0 30 28"><ellipse cx="17" cy="24" rx="11" ry="2" fill="#2a2a2a"/><path d="M2 13 L14 12 L14 14 Z" fill="#eee" stroke="#222" stroke-width="0.6"/><rect x="14" y="4" width="6" height="18" fill="#ddd" stroke="#222"/><path d="M20 8 L27 7 L27 19 L20 18 Z" fill="#c8c8c8" stroke="#222"/></svg>
<svg class="a" style="left:1645px;top:137px;" width="30" height="30" viewBox="0 0 30 30"><circle cx="15" cy="15" r="13.5" fill="none" stroke="#5a7cb8" stroke-width="2.4"/><circle cx="15" cy="15" r="8.7" fill="none" stroke="#5a7cb8" stroke-width="1.3"/><circle cx="15" cy="15" r="3.6" fill="#3a74d8"/></svg>
<div class="a" style="left:936px;top:175px;width:746px;height:2px;background:#111"></div>
<div class="a" style="left:936px;top:177px;width:744px;height:38px;background:#363636"></div>
<svg class="a" style="left:942px;top:183px;transform:scale(1.0);transform-origin:0 0" width="30" height="30" viewBox="0 0 30 30"><defs><linearGradient id="gc" x1="0" x2="1"><stop offset="0" stop-color="#2d5da0"/><stop offset=".4" stop-color="#90b8e8"/><stop offset="1" stop-color="#204a88"/></linearGradient><radialGradient id="gs" cx=".35" cy=".35"><stop offset="0" stop-color="#ff9a8a"/><stop offset=".5" stop-color="#d02020"/><stop offset="1" stop-color="#801010"/></radialGradient><linearGradient id="gy" x1="0" x2="1"><stop offset="0" stop-color="#fff8c0"/><stop offset=".6" stop-color="#f0d020"/><stop offset="1" stop-color="#b09000"/></linearGradient></defs><rect x="1" y="3" width="11" height="17" rx="5" ry="3" fill="url(#gc)"/><ellipse cx="6.5" cy="4" rx="5.5" ry="2.5" fill="#b8d0f0"/><circle cx="21" cy="13" r="7" fill="url(#gs)"/><polygon points="13,8 4,24 22,24" fill="url(#gy)"/></svg>
<svg class="a" style="left:953px;top:209px;" width="9" height="6" viewBox="0 0 9 6"><polygon points="0,0 9,0 4.5,6" fill="#8a8a8a"/></svg>
<div class="t" style="left:977px;top:187.9px;font-size:19px;color:#d8d8d8;letter-spacing:1.54px;font-weight:bold;">Geometry</div>
<div class="a" style="left:1085px;top:183px;width:448px;height:29px;background:#141414;border-top:1px solid #2a2a2a"></div>
<div class="t" style="left:1090px;top:188.8px;font-size:18px;color:#f0f0f0;letter-spacing:0.98px;">geo1</div>
<svg class="a" style="left:1536px;top:181px" width="28" height="28"><g transform="translate(14,14)" fill="#e4e4e4"><path d="M-3 -6.0 L-2.2 -12 L2.2 -12 L3 -6.0 Z" transform="rotate(0)"/><path d="M-3 -6.0 L-2.2 -12 L2.2 -12 L3 -6.0 Z" transform="rotate(45)"/><path d="M-3 -6.0 L-2.2 -12 L2.2 -12 L3 -6.0 Z" transform="rotate(90)"/><path d="M-3 -6.0 L-2.2 -12 L2.2 -12 L3 -6.0 Z" transform="rotate(135)"/><path d="M-3 -6.0 L-2.2 -12 L2.2 -12 L3 -6.0 Z" transform="rotate(180)"/><path d="M-3 -6.0 L-2.2 -12 L2.2 -12 L3 -6.0 Z" transform="rotate(225)"/><path d="M-3 -6.0 L-2.2 -12 L2.2 -12 L3 -6.0 Z" transform="rotate(270)"/><path d="M-3 -6.0 L-2.2 -12 L2.2 -12 L3 -6.0 Z" transform="rotate(315)"/><circle r="8.6"/></g><circle cx="14" cy="14" r="3.8" fill="#303030"/></svg>
<svg class="a" style="left:1559px;top:207px;" width="10" height="6" viewBox="0 0 10 6"><polygon points="0,0 10,0 5.0,6" fill="#8a8a8a"/></svg>
<svg class="a" style="left:1572px;top:183px;" width="30" height="28" viewBox="0 0 30 28"><path d="M7 2 L13 2 L11 11 L17 11 L19 2 L25 2 L20 24 L14 24 L16 15 L10 15 L8 24 L2 24 Z" fill="#0e1a38" stroke="#e8e8e8" stroke-width="1.6" stroke-linejoin="round"/></svg>
<svg class="a" style="left:1594px;top:207px;" width="10" height="6" viewBox="0 0 10 6"><polygon points="0,0 10,0 5.0,6" fill="#8a8a8a"/></svg>
<svg class="a" style="left:1609px;top:182px;" width="28" height="28" viewBox="0 0 28 28"><circle cx="14" cy="14" r="12" fill="#222" stroke="#e0e0e0" stroke-width="1.8"/><circle cx="15.5" cy="7.5" r="2" fill="#e8e8e8"/><path d="M12 11 L16 11 L13.5 21 L16 21" stroke="#e8e8e8" stroke-width="2.4" fill="none"/></svg>
<svg class="a" style="left:1645px;top:182px;" width="28" height="28" viewBox="0 0 28 28"><circle cx="14" cy="14" r="12" fill="#222" stroke="#e0e0e0" stroke-width="1.8"/><path d="M9.5 10.5 A4.5 4.5 0 1 1 15 14.5 L14 15.5 L14 17" stroke="#e8e8e8" stroke-width="3" fill="none"/><circle cx="14" cy="21" r="1.8" fill="#e8e8e8"/></svg>
<div class="a" style="left:936px;top:215px;width:744px;height:2px;background:#000"></div>
<div class="a" style="left:936px;top:217px;width:716px;height:328px;background:#3a3a3a"></div>
<div class="a" style="left:938px;top:249px;width:714px;height:294px;background:#3a3a3a;border-top:1px solid #555;border-left:1px solid #2a2a2a"></div>
<div class="a" style="left:940px;top:219px;width:118px;height:31px;background:linear-gradient(#4c4c4c,#383838);border:1px solid #1e1e1e"></div>
<div class="t" style="left:952.5px;top:227.4px;font-size:18.4px;color:#d4d4d4;letter-spacing:0.94px;">Transform</div>
<div class="a" style="left:1058px;top:219px;width:102px;height:32px;background:linear-gradient(#4a4a4a,#3c3c3c);border-right:1px solid #222"></div>
<div class="t" style="left:1070.5px;top:227.4px;font-size:18.4px;color:#d4d4d4;letter-spacing:1.18px;">Material</div>
<div class="a" style="left:1160px;top:219px;width:92px;height:31px;background:linear-gradient(#4c4c4c,#383838);border:1px solid #1e1e1e"></div>
<div class="t" style="left:1172.5px;top:227.4px;font-size:18.4px;color:#d4d4d4;letter-spacing:0.87px;">Render</div>
<div class="a" style="left:1252px;top:219px;width:68px;height:31px;background:linear-gradient(#4c4c4c,#383838);border:1px solid #1e1e1e"></div>
<div class="t" style="left:1264.5px;top:227.4px;font-size:18.4px;color:#d4d4d4;letter-spacing:0.73px;">Misc</div>
<div class="t" style="left:666px;width:500px;text-align:right;top:267.8px;font-size:18px;color:#c4c4c4;letter-spacing:1.24px;">Material</div>
<div class="a" style="left:1187px;top:262px;width:340px;height:29px;background:#141414;border-top:1px solid #2a2a2a"></div>
<div class="t" style="left:1192px;top:268.3px;font-size:18.5px;color:#f4f4f4;letter-spacing:0.06px;font-family:'Liberation Mono',monospace;font-weight:bold;">/shop/billowysmoke</div>
<svg class="a" style="left:1530px;top:266px;" width="30" height="22" viewBox="0 0 30 22"><path d="M2.5 19 Q8 3 20 8.5 L28 2 L28 19 L13 19 L18.5 14.5 Q10 11 2.5 19 Z" fill="url(#gundo)" stroke="#1a1a2e" stroke-width="1.4" stroke-linejoin="round"/><defs><linearGradient id="gundo" x1="0" y1="0" x2="1" y2="1"><stop offset="0" stop-color="#f0f0f0"/><stop offset="1" stop-color="#b8b8b8"/></linearGradient></defs></svg>
<svg class="a" style="left:1566px;top:262px;" width="34" height="30" viewBox="0 0 34 30"><rect x="8" y="2" width="12" height="4" fill="#999"/><rect x="2" y="6" width="26" height="8" fill="#e8e8e8" stroke="#333" stroke-width="0.8"/><rect x="9" y="14" width="10" height="4" fill="#888"/><path d="M14 12 L14 28 L18 24 L21 29 L24 28 L21 23 L26 23 Z" fill="#111" stroke="#eee" stroke-width="1.2"/></svg>
<div class="a" style="left:1613px;top:261px;width:30px;height:29px;background:linear-gradient(#444,#333);border:1px solid #222"></div>
<svg class="a" style="left:1623px;top:271px;" width="9" height="8" viewBox="0 0 9 8"><polygon points="0,0 9,0 4.5,8" fill="#8a8a8a"/></svg>
<div class="a" style="left:1652px;top:218px;width:25px;height:326px;background:#262626;border:1px solid #1a1a1a"></div>
<div class="a" style="left:1653px;top:219px;width:23px;height:102px;background:linear-gradient(90deg,#4e4e4e,#5a5a5a 50%,#4a4a4a)"></div>
<div class="a" style="left:1660px;top:264px;width:2px;height:2px;background:#111"></div>
<div class="a" style="left:1663px;top:264px;width:2px;height:2px;background:#111"></div>
<div class="a" style="left:1666px;top:264px;width:2px;height:2px;background:#111"></div>
<div class="a" style="left:1660px;top:267px;width:2px;height:2px;background:#111"></div>
<div class="a" style="left:1663px;top:267px;width:2px;height:2px;background:#111"></div>
<div class="a" style="left:1666px;top:267px;width:2px;height:2px;background:#111"></div>
<div class="a" style="left:1660px;top:270px;width:2px;height:2px;background:#111"></div>
<div class="a" style="left:1663px;top:270px;width:2px;height:2px;background:#111"></div>
<div class="a" style="left:1666px;top:270px;width:2px;height:2px;background:#111"></div>
<div class="a" style="left:1660px;top:273px;width:2px;height:2px;background:#111"></div>
<div class="a" style="left:1663px;top:273px;width:2px;height:2px;background:#111"></div>
<div class="a" style="left:1666px;top:273px;width:2px;height:2px;background:#111"></div>
<div class="a" style="left:1660px;top:276px;width:2px;height:2px;background:#111"></div>
<div class="a" style="left:1663px;top:276px;width:2px;height:2px;background:#111"></div>
<div class="a" style="left:1666px;top:276px;width:2px;height:2px;background:#111"></div>
<div class="a" style="left:1664px;top:321px;width:2px;height:159px;background:#2e2e2e"></div>
<div class="a" style="left:1653px;top:480px;width:23px;height:32px;background:linear-gradient(#4a4a4a,#3c3c3c);border-top:1px solid #555"></div>
<div class="a" style="left:1653px;top:512px;width:23px;height:31px;background:linear-gradient(#4a4a4a,#3c3c3c);border-top:1px solid #1e1e1e"></div>
<svg class="a" style="left:1660px;top:491px;" width="9" height="7" viewBox="0 0 9 7"><polygon points="0,7 9,7 4.5,0" fill="#888"/></svg>
<svg class="a" style="left:1660px;top:523px;" width="9" height="7" viewBox="0 0 9 7"><polygon points="0,0 9,0 4.5,7" fill="#888"/></svg>
<div class="a" style="left:1677px;top:217px;width:3px;height:328px;background:#3a3a3a"></div>
<div class="a" style="left:936px;top:545px;width:746px;height:2px;background:#2a2a2a"></div>
<div class="a" style="left:936px;top:547px;width:746px;height:12px;background:linear-gradient(#4a4a4a,#3e3e3e);border-top:1px solid #5a5a5a"></div>
<svg class="a" style="left:1250px;top:551px;" width="8" height="5" viewBox="0 0 8 5"><polygon points="0,5 8,5 4.0,0" fill="#999"/></svg>
<svg class="a" style="left:1358px;top:551px;" width="8" height="5" viewBox="0 0 8 5"><polygon points="0,0 8,0 4.0,5" fill="#999"/></svg>
<div class="a" style="left:1294px;top:551px;width:1px;height:1px;background:#777"></div>
<div class="a" style="left:1294px;top:554px;width:1px;height:1px;background:#777"></div>
<div class="a" style="left:1297px;top:551px;width:1px;height:1px;background:#777"></div>
<div class="a" style="left:1297px;top:554px;width:1px;height:1px;background:#777"></div>
<div class="a" style="left:1300px;top:551px;width:1px;height:1px;background:#777"></div>
<div class="a" style="left:1300px;top:554px;width:1px;height:1px;background:#777"></div>
<div class="a" style="left:1303px;top:551px;width:1px;height:1px;background:#777"></div>
<div class="a" style="left:1303px;top:554px;width:1px;height:1px;background:#777"></div>
<div class="a" style="left:1306px;top:551px;width:1px;height:1px;background:#777"></div>
<div class="a" style="left:1306px;top:554px;width:1px;height:1px;background:#777"></div>
<div class="a" style="left:1309px;top:551px;width:1px;height:1px;background:#777"></div>
<div class="a" style="left:1309px;top:554px;width:1px;height:1px;background:#777"></div>
<div class="a" style="left:1312px;top:551px;width:1px;height:1px;background:#777"></div>
<div class="a" style="left:1312px;top:554px;width:1px;height:1px;background:#777"></div>
<div class="a" style="left:1315px;top:551px;width:1px;height:1px;background:#777"></div>
<div class="a" style="left:1315px;top:554px;width:1px;height:1px;background:#777"></div>
<div class="a" style="left:1318px;top:551px;width:1px;height:1px;background:#777"></div>
<div class="a" style="left:1318px;top:554px;width:1px;height:1px;background:#777"></div>
<div class="a" style="left:1321px;top:551px;width:1px;height:1px;background:#777"></div>
<div class="a" style="left:1321px;top:554px;width:1px;height:1px;background:#777"></div>
<div class="a" style="left:1324px;top:551px;width:1px;height:1px;background:#777"></div>
<div class="a" style="left:1324px;top:554px;width:1px;height:1px;background:#777"></div>
<div class="a" style="left:1327px;top:551px;width:1px;height:1px;background:#777"></div>
<div class="a" style="left:1327px;top:554px;width:1px;height:1px;background:#777"></div>
<div class="a" style="left:936px;top:559px;width:746px;height:28px;background:#2a2a2a"></div>
<div class="a" style="left:936px;top:560px;width:91px;height:27px;background:#3c3c3c"></div>
<div class="a" style="left:1027px;top:560px;width:2px;height:27px;background:#222"></div>
<div class="t" style="left:946px;top:567.9px;font-size:14.3px;color:#d2d2d2;letter-spacing:0.89px;font-style:italic;">/obj</div>
<svg class="a" style="left:1007px;top:567px;" width="12" height="12" viewBox="0 0 12 12"><path d="M2 2L10 10M10 2L2 10" stroke="#e8e8e8" stroke-width="2.6" stroke-linecap="square"/></svg>
<div class="a" style="left:1030px;top:560px;width:134px;height:27px;background:#2c2c2c"></div>
<div class="a" style="left:1164px;top:560px;width:2px;height:27px;background:#222"></div>
<div class="t" style="left:1040px;top:567.9px;font-size:14.3px;color:#d2d2d2;letter-spacing:0.52px;">Tree View</div>
<svg class="a" style="left:1144px;top:567px;" width="12" height="12" viewBox="0 0 12 12"><path d="M2 2L10 10M10 2L2 10" stroke="#e8e8e8" stroke-width="2.6" stroke-linecap="square"/></svg>
<div class="a" style="left:1167px;top:560px;width:177px;height:27px;background:#2c2c2c"></div>
<div class="a" style="left:1344px;top:560px;width:2px;height:27px;background:#222"></div>
<div class="t" style="left:1177px;top:567.9px;font-size:14.3px;color:#d2d2d2;letter-spacing:0.80px;">Material Palette</div>
<svg class="a" style="left:1324px;top:567px;" width="12" height="12" viewBox="0 0 12 12"><path d="M2 2L10 10M10 2L2 10" stroke="#e8e8e8" stroke-width="2.6" stroke-linecap="square"/></svg>
<div class="a" style="left:1347px;top:560px;width:169px;height:27px;background:#2c2c2c"></div>
<div class="a" style="left:1516px;top:560px;width:2px;height:27px;background:#222"></div>
<div class="t" style="left:1357px;top:567.9px;font-size:14.3px;color:#d2d2d2;letter-spacing:0.72px;">Asset Browser</div>
<svg class="a" style="left:1496px;top:567px;" width="12" height="12" viewBox="0 0 12 12"><path d="M2 2L10 10M10 2L2 10" stroke="#e8e8e8" stroke-width="2.6" stroke-linecap="square"/></svg>
<div class="a" style="left:1526px;top:572px;width:13px;height:3px;background:#e6e6e6"></div>
<div class="a" style="left:1531px;top:567px;width:3px;height:13px;background:#e6e6e6"></div>
<div class="a" style="left:1641px;top:566px;width:14px;height:14px;background:linear-gradient(135deg,#f4f4f4,#d8d8d8 45%,#f0f0e8 50%,#c8c8c8);border-top:2px solid #1e1e30"></div>
<svg class="a" style="left:1666px;top:570px;" width="9" height="7" viewBox="0 0 9 7"><polygon points="0,0 9,0 4.5,7" fill="#e6e6e6"/></svg>
<div class="a" style="left:936px;top:587px;width:744px;height:47px;background:linear-gradient(#3e3e3e,#383838)"></div>
<svg class="a" style="left:942px;top:596px;" width="70" height="32" viewBox="0 0 70 32"><defs><linearGradient id="ga" x1="0" y1="0" x2="0" y2="1"><stop offset="0" stop-color="#f4f4f4"/><stop offset=".5" stop-color="#d0d0d0"/><stop offset="1" stop-color="#989898"/></linearGradient><linearGradient id="gb" x1="0" y1="0" x2="0" y2="1"><stop offset="0" stop-color="#d0d0d0"/><stop offset=".5" stop-color="#b0b0b0"/><stop offset="1" stop-color="#808080"/></linearGradient></defs><ellipse cx="15" cy="27" rx="12" ry="2.5" fill="#222" opacity=".5"/><ellipse cx="52" cy="27" rx="12" ry="2.5" fill="#222" opacity=".5"/><path d="M1 13.5 L14.5 1.5 L14.5 8 L26 8 L26 19.5 L14.5 19.5 L14.5 25.5 Z" fill="url(#ga)" stroke="#1a1a2e" stroke-width="1.4" stroke-linejoin="round"/><polygon points="23,21 29,25 23,30" fill="#999"/><path d="M63 13.5 L49.5 1.5 L49.5 8 L38 8 L38 19.5 L49.5 19.5 L49.5 25.5 Z" fill="url(#gb)" stroke="#1a1a2e" stroke-width="1.4" stroke-linejoin="round"/><polygon points="61,21 67,25 61,30" fill="#999"/></svg>
<svg class="a" style="left:943px;top:597px;" width="60" height="32" viewBox="0 0 60 32"><polygon points="100,100 0,0" /></svg>
<svg class="a" style="left:1023px;top:620px;" width="0" height="0" viewBox="0 0 0 0"><polygon points="0,0 0,0 0.0,0" fill="#000"/></svg>
<div class="a" style="left:1019px;top:590px;width:522px;height:41px;background:linear-gradient(#3c3c3c,#353535);border:1px solid #151515"></div>
<div class="a" style="left:1522px;top:591px;width:18px;height:39px;background:linear-gradient(#3a3a3a,#2e2e2e)"></div>
<svg class="a" style="left:1527px;top:607px;" width="9" height="8" viewBox="0 0 9 8"><polygon points="0,0 9,0 4.5,8" fill="#8a8a8a"/></svg>
<svg class="a" style="left:1025px;top:592px;" width="34" height="36" viewBox="0 0 34 36"><rect x="2" y="14" width="30" height="20" fill="#3e5050" stroke="#1a1a1a"/><path d="M5 20h12M5 24h10M5 28h14M8 18v8M13 18v8M20 24h9" stroke="#e0e0e0" stroke-width="1.4"/><polygon points="1,8 32,2 33,7 2,13" fill="#ddd" stroke="#222"/><path d="M7 7l3 5M14 5.5l3 5M21 4l3 5M28 3l3 5" stroke="#222" stroke-width="2.4"/><rect x="2" y="12" width="30" height="4" fill="#aaa" stroke="#222"/></svg>
<div class="t" style="left:1066px;top:599.8px;font-size:18px;color:#dedede;letter-spacing:0.99px;">obj</div>
<svg class="a" style="left:1555px;top:595px;" width="30" height="28" viewBox="0 0 30 28"><ellipse cx="17" cy="24" rx="11" ry="2" fill="#2a2a2a"/><path d="M2 13 L14 12 L14 14 Z" fill="#eee" stroke="#222" stroke-width="0.6"/><rect x="14" y="4" width="6" height="18" fill="#ddd" stroke="#222"/><path d="M20 8 L27 7 L27 19 L20 18 Z" fill="#c8c8c8" stroke="#222"/></svg>
<svg class="a" style="left:1591px;top:595px;" width="30" height="30" viewBox="0 0 30 30"><circle cx="15" cy="15" r="13.5" fill="none" stroke="#5a7cb8" stroke-width="2.4"/><circle cx="15" cy="15" r="8.7" fill="none" stroke="#5a7cb8" stroke-width="1.3"/><circle cx="15" cy="15" r="3.6" fill="#3a74d8"/></svg>
<svg class="a" style="left:1644px;top:596px" width="28" height="28"><g transform="translate(14,14)" fill="#e4e4e4"><path d="M-3 -6.0 L-2.2 -12 L2.2 -12 L3 -6.0 Z" transform="rotate(0)"/><path d="M-3 -6.0 L-2.2 -12 L2.2 -12 L3 -6.0 Z" transform="rotate(45)"/><path d="M-3 -6.0 L-2.2 -12 L2.2 -12 L3 -6.0 Z" transform="rotate(90)"/><path d="M-3 -6.0 L-2.2 -12 L2.2 -12 L3 -6.0 Z" transform="rotate(135)"/><path d="M-3 -6.0 L-2.2 -12 L2.2 -12 L3 -6.0 Z" transform="rotate(180)"/><path d="M-3 -6.0 L-2.2 -12 L2.2 -12 L3 -6.0 Z" transform="rotate(225)"/><path d="M-3 -6.0 L-2.2 -12 L2.2 -12 L3 -6.0 Z" transform="rotate(270)"/><path d="M-3 -6.0 L-2.2 -12 L2.2 -12 L3 -6.0 Z" transform="rotate(315)"/><circle r="8.6"/></g><circle cx="14" cy="14" r="3.8" fill="#303030"/></svg>
<div class="a" style="left:936px;top:634px;width:744px;height:2px;background:#111"></div>
<div class="a" style="left:936px;top:636px;width:744px;height:49px;background:#2f2f2f;border-top:1px solid #3f3f3f"></div>
<div class="a" style="left:937px;top:637px;width:15px;height:47px;background:linear-gradient(90deg,#4a4a4a,#404040)"></div>
<svg class="a" style="left:941px;top:642px;" width="8" height="7" viewBox="0 0 8 7"><polygon points="0,7 8,7 4.0,0" fill="#000"/></svg>
<div class="a" style="left:952px;top:637px;width:2px;height:47px;background:#1a1a1a"></div>
<div class="a" style="left:1678px;top:636px;width:2px;height:49px;background:#222"></div>
<div class="a" style="left:936px;top:684px;width:744px;height:2px;background:#111"></div>
<div class="a" style="left:936px;top:686px;width:744px;height:450px;background:#2e2e2e"></div>
<div class="a" style="left:1678px;top:686px;width:4px;height:450px;background:#2a2a2a"></div>
<div class="t" style="left:1173px;width:500px;text-align:right;top:695.8px;font-size:31px;color:#393939;letter-spacing:-2.46px;font-weight:bold;">Scene</div>
<div class="t" style="left:1173px;width:500px;text-align:right;top:1100.3px;font-size:31px;color:#393939;letter-spacing:-0.94px;font-weight:bold;">Non-Commercial Edition</div>
<div class="a" style="left:0px;top:1135px;width:1682px;height:2px;background:#050505"></div>
<div class="a" style="left:0px;top:1137px;width:1682px;height:78px;background:#2e2e2e;border-top:2px solid #565656"></div>
<div class="a" style="left:1px;top:1137px;width:16px;height:78px;background:linear-gradient(90deg,#4a4a4a,#424242)"></div>
<svg class="a" style="left:5px;top:1201px;" width="8" height="6" viewBox="0 0 8 6"><polygon points="0,0 8,0 4.0,6" fill="#000"/></svg>
<div class="a" style="left:17px;top:1137px;width:2px;height:78px;background:#1e1e1e"></div>
<div class="a" style="left:33px;top:1155px;width:48px;height:42px;background:linear-gradient(#4c4c4c,#3a3a3a);border:1px solid #222"></div>
<div class="a" style="left:81px;top:1155px;width:47px;height:42px;background:linear-gradient(#4c4c4c,#3a3a3a);border:1px solid #222"></div>
<div class="a" style="left:128px;top:1155px;width:48px;height:42px;background:linear-gradient(#4c4c4c,#3a3a3a);border:1px solid #222"></div>
<div class="a" style="left:176px;top:1155px;width:48px;height:42px;background:#b8861f;border:1px solid #222"></div>
<div class="a" style="left:224px;top:1155px;width:48px;height:42px;background:linear-gradient(#4c4c4c,#3a3a3a);border:1px solid #222"></div>
<div class="a" style="left:272px;top:1155px;width:48px;height:42px;background:linear-gradient(#4c4c4c,#3a3a3a);border:1px solid #222"></div>
<svg class="a" style="left:33px;top:1155px;" width="287" height="42" viewBox="0 0 287 42"><rect x="4" y="11" width="8" height="19" rx="2" fill="#e6e6e6" stroke="#333"/><polygon points="13,20 27,11 27,30" fill="#e8e8e8" stroke="#2a2a3a"/><polygon points="29,20 43,11 43,30" fill="#e8e8e8" stroke="#2a2a3a"/><rect x="60" y="11" width="8" height="19" fill="#58c030" stroke="#1a4010"/><rect x="62.5" y="14" width="3" height="13" fill="#a8f080"/><polygon points="70,20 84,11 84,30" fill="#e8e8e8" stroke="#1a1a3a" stroke-width="1.3"/><polygon points="110,20 127,8 127,32" fill="#e8e8e8" stroke="#444"/><rect x="157" y="9" width="26" height="24" fill="#e4e8e4" stroke="#333" stroke-width="2"/><polygon points="207,8 225,20 207,32" fill="#e8e8e8" stroke="#444"/><polygon points="253,11 267,20 253,30" fill="#e8e8e8" stroke="#1a1a3a" stroke-width="1.3"/><rect x="269" y="11" width="8" height="19" fill="#58c030" stroke="#1a4010"/><rect x="271.5" y="14" width="3" height="13" fill="#a8f080"/></svg>
<div class="a" style="left:334px;top:1163px;width:88px;height:28px;background:#141414"></div>
<div class="t" style="left:339px;top:1168.8px;font-size:18px;color:#f0f0f0;letter-spacing:0.05px;font-family:'Liberation Mono',monospace;">1</div>
<div class="a" style="left:423px;top:1162px;width:61px;height:30px;background:linear-gradient(#505050,#3c3c3c);border:1px solid #1a1a1a"></div>
<div class="a" style="left:452px;top:1163px;width:2px;height:28px;background:#1a1a1a"></div>
<div class="a" style="left:430px;top:1175px;width:16px;height:3px;background:#dcdcdc"></div>
<div class="a" style="left:461px;top:1175px;width:15px;height:3px;background:#dcdcdc"></div>
<div class="a" style="left:467px;top:1169px;width:3px;height:15px;background:#dcdcdc"></div>
<div class="a" style="left:498px;top:1163px;width:74px;height:28px;background:#141414"></div>
<div class="t" style="left:501px;top:1168.8px;font-size:18px;color:#f0f0f0;letter-spacing:0.05px;font-family:'Liberation Mono',monospace;">1</div>
<div class="a" style="left:577px;top:1142px;width:801px;height:54px;background:#2e2e2e;border:1px solid #cfcfcf;border-bottom:none;border-right:1px solid #cfcfcf"></div>
<div class="a" style="left:577px;top:1169px;width:801px;height:1px;background:#cfcfcf"></div>
<svg class="a" style="left:0;top:0" width="1682" height="1260"><rect x="593.3" y="1164" width="1.1" height="11" fill="#c4c4c4"/><rect x="613.3" y="1164" width="1.1" height="11" fill="#c4c4c4"/><rect x="633.3" y="1164" width="1.1" height="11" fill="#c4c4c4"/><rect x="653.2" y="1162.5" width="1.6" height="14" fill="#dcdcdc"/><rect x="673.3" y="1164" width="1.1" height="11" fill="#c4c4c4"/><rect x="693.3" y="1164" width="1.1" height="11" fill="#c4c4c4"/><rect x="713.3" y="1164" width="1.1" height="11" fill="#c4c4c4"/><rect x="733.2" y="1162.5" width="1.6" height="14" fill="#dcdcdc"/><rect x="753.3" y="1164" width="1.1" height="11" fill="#c4c4c4"/><rect x="773.3" y="1164" width="1.1" height="11" fill="#c4c4c4"/><rect x="793.3" y="1164" width="1.1" height="11" fill="#c4c4c4"/><rect x="813.2" y="1162.5" width="1.6" height="14" fill="#dcdcdc"/><rect x="833.3" y="1164" width="1.1" height="11" fill="#c4c4c4"/><rect x="853.3" y="1164" width="1.1" height="11" fill="#c4c4c4"/><rect x="873.3" y="1164" width="1.1" height="11" fill="#c4c4c4"/><rect x="893.2" y="1162.5" width="1.6" height="14" fill="#dcdcdc"/><rect x="913.3" y="1164" width="1.1" height="11" fill="#c4c4c4"/><rect x="933.3" y="1164" width="1.1" height="11" fill="#c4c4c4"/><rect x="953.3" y="1164" width="1.1" height="11" fill="#c4c4c4"/><rect x="973.2" y="1162.5" width="1.6" height="14" fill="#dcdcdc"/><rect x="993.3" y="1164" width="1.1" height="11" fill="#c4c4c4"/><rect x="1013.3" y="1164" width="1.1" height="11" fill="#c4c4c4"/><rect x="1033.3" y="1164" width="1.1" height="11" fill="#c4c4c4"/><rect x="1053.2" y="1162.5" width="1.6" height="14" fill="#dcdcdc"/><rect x="1073.3" y="1164" width="1.1" height="11" fill="#c4c4c4"/><rect x="1093.3" y="1164" width="1.1" height="11" fill="#c4c4c4"/><rect x="1113.3" y="1164" width="1.1" height="11" fill="#c4c4c4"/><rect x="1133.2" y="1162.5" width="1.6" height="14" fill="#dcdcdc"/><rect x="1153.3" y="1164" width="1.1" height="11" fill="#c4c4c4"/><rect x="1173.3" y="1164" width="1.1" height="11" fill="#c4c4c4"/><rect x="1193.3" y="1164" width="1.1" height="11" fill="#c4c4c4"/><rect x="1213.2" y="1162.5" width="1.6" height="14" fill="#dcdcdc"/><rect x="1233.3" y="1164" width="1.1" height="11" fill="#c4c4c4"/><rect x="1253.3" y="1164" width="1.1" height="11" fill="#c4c4c4"/><rect x="1273.3" y="1164" width="1.1" height="11" fill="#c4c4c4"/><rect x="1293.2" y="1162.5" width="1.6" height="14" fill="#dcdcdc"/><rect x="1313.3" y="1164" width="1.1" height="11" fill="#c4c4c4"/><rect x="1333.3" y="1164" width="1.1" height="11" fill="#c4c4c4"/><rect x="1353.3" y="1164" width="1.1" height="11" fill="#c4c4c4"/><rect x="1373.2" y="1162.5" width="1.6" height="14" fill="#dcdcdc"/></svg>
<div class="t" style="left:654.9666666666666px;top:1147.4px;font-size:16.6px;color:#d0d0d0;letter-spacing:0.03px;font-family:'Liberation Mono',monospace;">24</div>
<div class="t" style="left:734.9666666666666px;top:1147.4px;font-size:16.6px;color:#d0d0d0;letter-spacing:0.03px;font-family:'Liberation Mono',monospace;">48</div>
<div class="t" style="left:814.9666666666666px;top:1147.4px;font-size:16.6px;color:#d0d0d0;letter-spacing:0.03px;font-family:'Liberation Mono',monospace;">72</div>
<div class="t" style="left:894.9666666666667px;top:1147.4px;font-size:16.6px;color:#d0d0d0;letter-spacing:0.03px;font-family:'Liberation Mono',monospace;">96</div>
<div class="t" style="left:974.9666666666667px;top:1147.4px;font-size:16.6px;color:#d0d0d0;letter-spacing:0.03px;font-family:'Liberation Mono',monospace;">120</div>
<div class="t" style="left:1054.9666666666667px;top:1147.4px;font-size:16.6px;color:#d0d0d0;letter-spacing:0.03px;font-family:'Liberation Mono',monospace;">144</div>
<div class="t" style="left:1134.9666666666667px;top:1147.4px;font-size:16.6px;color:#d0d0d0;letter-spacing:0.03px;font-family:'Liberation Mono',monospace;">168</div>
<div class="t" style="left:1214.9666666666667px;top:1147.4px;font-size:16.6px;color:#d0d0d0;letter-spacing:0.03px;font-family:'Liberation Mono',monospace;">192</div>
<div class="t" style="left:1294.9666666666667px;top:1147.4px;font-size:16.6px;color:#d0d0d0;letter-spacing:0.03px;font-family:'Liberation Mono',monospace;">216</div>
<div class="a" style="left:577px;top:1143px;width:31px;height:24px;background:#000;border:2px solid #e8e8e8"></div>
<div class="t" style="left:579px;top:1143.6px;font-size:20.5px;color:#1e1e1e;letter-spacing:0.05px;font-family:'Liberation Mono',monospace;">1</div>
<div class="t" style="left:584px;top:1144.1px;font-size:20.5px;color:#ffffff;letter-spacing:0.05px;font-family:'Liberation Mono',monospace;">1</div>
<div class="a" style="left:577px;top:1197px;width:21px;height:14px;background:#3c3c3c;border:1px solid #222"></div>
<div class="a" style="left:598px;top:1197px;width:760px;height:14px;background:linear-gradient(#555,#444);border:1px solid #222"></div>
<div class="a" style="left:1358px;top:1197px;width:20px;height:14px;background:#3c3c3c;border:1px solid #222"></div>
<div class="a" style="left:583px;top:1203px;width:2px;height:2px;background:#111"></div>
<div class="a" style="left:586px;top:1203px;width:2px;height:2px;background:#111"></div>
<div class="a" style="left:589px;top:1203px;width:2px;height:2px;background:#111"></div>
<div class="a" style="left:1364px;top:1203px;width:2px;height:2px;background:#111"></div>
<div class="a" style="left:1367px;top:1203px;width:2px;height:2px;background:#111"></div>
<div class="a" style="left:1370px;top:1203px;width:2px;height:2px;background:#111"></div>
<div class="a" style="left:975px;top:1204px;width:1px;height:1px;background:#aaa"></div>
<div class="a" style="left:978px;top:1204px;width:1px;height:1px;background:#aaa"></div>
<div class="a" style="left:981px;top:1204px;width:1px;height:1px;background:#aaa"></div>
<div class="a" style="left:1384px;top:1163px;width:73px;height:28px;background:#141414"></div>
<div class="t" style="left:1387px;top:1168.8px;font-size:18px;color:#f0f0f0;letter-spacing:0.05px;font-family:'Liberation Mono',monospace;">240</div>
<div class="a" style="left:1474px;top:1157px;width:38px;height:38px;background:linear-gradient(#4c4c4c,#3a3a3a);border:1px solid #222"></div>
<svg class="a" style="left:1474px;top:1157px;" width="38" height="38" viewBox="0 0 38 38"><g stroke="#1e1e1e" stroke-width="1" fill="#d8d8d0"><path d="M17.5 15.5 L31 29 L28.5 31.5 L26 29 L24 31 L21.5 28.5 L23.5 26.5 L15 18 Z"/></g><circle cx="12.5" cy="11.5" r="6.5" fill="none" stroke="#1e1e1e" stroke-width="6"/><circle cx="12.5" cy="11.5" r="6.5" fill="none" stroke="#dcdcd4" stroke-width="4"/></svg>
<div class="a" style="left:1519px;top:1157px;width:37px;height:38px;background:linear-gradient(#4c4c4c,#3a3a3a);border:1px solid #222"></div>
<div class="a" style="left:1556px;top:1157px;width:37px;height:38px;background:linear-gradient(#4c4c4c,#3a3a3a);border:1px solid #222"></div>
<div class="a" style="left:1593px;top:1157px;width:37px;height:38px;background:linear-gradient(#4c4c4c,#3a3a3a);border:1px solid #222"></div>
<div class="a" style="left:1630px;top:1157px;width:37px;height:38px;background:linear-gradient(#4c4c4c,#3a3a3a);border:1px solid #222"></div>
<svg class="a" style="left:1519px;top:1157px;" width="148" height="38" viewBox="0 0 148 38"><circle cx="18" cy="17" r="13" fill="#eee"/><circle cx="18" cy="17" r="11.3" fill="#1e1e30"/><circle cx="18" cy="17" r="8.3" fill="#e6e6e6"/><path d="M18 11.5v11M12.5 17h11" stroke="#1e1e30" stroke-width="2.2"/><path d="M44 26 L70 26 Q70 12 57 10 Q50 9.5 47 14" fill="none" stroke="#111" stroke-width="6"/><path d="M44 26 L70 26 Q70 12 57 10 Q50 9.5 47 14" fill="none" stroke="#f0f0f0" stroke-width="3"/><polygon points="42,9 52,13 43,21" fill="#f0f0f0" stroke="#111" stroke-width="1.3"/><polygon points="61,29 71,29 66,34" fill="#888"/><ellipse cx="81" cy="19" rx="3" ry="5" fill="#bbb" stroke="#333"/><path d="M83 12 L96 4 L96 32 L83 24 Z" fill="#1e2230" stroke="#444"/><ellipse cx="96" cy="18" rx="6" ry="14" fill="#1e2230" stroke="#e8e8e8" stroke-width="1.8"/><ellipse cx="94" cy="18" rx="2" ry="4" fill="#999"/><rect x="119" y="5" width="22" height="23" fill="#ececec" stroke="#1a1a2a" stroke-width="1.3"/><rect x="120" y="6.5" width="20" height="4" fill="#999"/><path d="M129.5 16 L129.5 32 L133.5 28 L136 33 L139 31.5 L136.5 27 L142.5 26.5 Z" fill="#111" stroke="#f4f4f4" stroke-width="1.4" stroke-linejoin="round"/></svg>
<div class="a" style="left:1680px;top:1137px;width:2px;height:78px;background:#111"></div>
<div class="a" style="left:0px;top:1215px;width:1682px;height:45px;background:#1a1a1a;border-top:1px solid #0a0a0a"></div>
<div class="a" style="left:1380px;top:1216px;width:302px;height:44px;background:#3a3a3a"></div>
<svg class="a" style="left:1383px;top:1220px;" width="34" height="36" viewBox="0 0 34 36"><ellipse cx="16" cy="17" rx="13" ry="10" fill="#cfcfcf" stroke="#777"/><path d="M6 14 Q12 8 18 14 T28 16 M8 20 Q14 14 20 20" stroke="#888" fill="none"/><polygon points="26,28 32,32 26,36" fill="#888"/></svg>
<div class="a" style="left:1416px;top:1216px;width:1px;height:44px;background:#2a2a2a"></div>
<svg class="a" style="left:1419px;top:1219px;" width="32" height="36" viewBox="0 0 32 36"><path d="M4 17 A11 11 0 0 1 24 10 L26 5 L29 17 L18 16 L21 13 A7 7 0 0 0 9 17 Z" fill="#bbb" stroke="#222" stroke-width="1"/><path d="M28 20 A11 11 0 0 1 8 27 L6 32 L3 20 L14 21 L11 24 A7 7 0 0 0 23 20 Z" fill="#aaa" stroke="#222" stroke-width="1"/></svg>
<div class="a" style="left:1452px;top:1216px;width:1px;height:44px;background:#2a2a2a"></div>
<div class="a" style="left:1453px;top:1216px;width:164px;height:44px;background:linear-gradient(#4a4a4a,#3e3e3e)"></div>
<div class="a" style="left:1617px;top:1216px;width:24px;height:44px;background:#353535"></div>
<svg class="a" style="left:1624px;top:1227px;" width="9" height="8" viewBox="0 0 9 8"><polygon points="0,8 9,8 4.5,0" fill="#888"/></svg>
<svg class="a" style="left:1624px;top:1239px;" width="9" height="8" viewBox="0 0 9 8"><polygon points="0,0 9,0 4.5,8" fill="#888"/></svg>
<div class="t" style="left:1470px;top:1228.8px;font-size:18px;color:#d8d8d8;letter-spacing:1.45px;">Auto Update</div>
<div class="a" style="left:1641px;top:1216px;width:41px;height:44px;background:#3a3a3a"></div>
<svg class="a" style="left:966px;top:646px;" width="28" height="28" viewBox="0 0 28 28"><path d="M6 6v17M6 11h10M6 17h10M6 23h10" stroke="#c8d8c8" stroke-width="2"/><rect x="3" y="3" width="6" height="5" fill="#eee"/><rect x="15" y="9" width="6" height="5" fill="#b8c8b8"/><rect x="15" y="15" width="6" height="5" fill="#b8c8b8"/><rect x="15" y="21" width="6" height="5" fill="#b8c8b8"/></svg>
<svg class="a" style="left:1002px;top:646px;" width="26" height="28" viewBox="0 0 26 28"><rect x="1" y="1" width="23" height="26" fill="#dfe8df" stroke="#222"/><path d="M2 7h21M2 13h21M2 19h21" stroke="#9aae9a" stroke-width="2.5"/></svg>
<svg class="a" style="left:1036px;top:646px;" width="30" height="28" viewBox="0 0 30 28"><rect x="4" y="1" width="25" height="26" fill="#8c8c8c"/><rect x="1" y="12" width="16" height="15" fill="#eee" stroke="#222"/><path d="M4 16h4M10 16h4M4 20h4M10 20h3M4 24h9" stroke="#223" stroke-width="1.6"/></svg>
<svg class="a" style="left:1072px;top:646px;" width="28" height="28" viewBox="0 0 28 28"><rect x="1" y="1" width="26" height="26" fill="#eee"/><rect x="4" y="4" width="6" height="6" fill="#d22"/><rect x="11" y="4" width="6" height="6" fill="#f80"/><rect x="18" y="4" width="6" height="6" fill="#ec2"/><rect x="4" y="11" width="6" height="6" fill="#26a"/><rect x="11" y="11" width="6" height="6" fill="#4b3"/><rect x="18" y="11" width="6" height="6" fill="#69d"/><rect x="4" y="18" width="6" height="6" fill="#111"/><rect x="11" y="18" width="6" height="6" fill="#888"/><rect x="18" y="18" width="6" height="6" fill="#bdb"/></svg>
<svg class="a" style="left:1123px;top:646px;" width="28" height="28" viewBox="0 0 28 28"><rect x="1" y="2" width="25" height="24" fill="#bdbdbd" stroke="#222"/><rect x="1" y="2" width="25" height="3" fill="#666"/><rect x="5" y="9" width="10" height="5" fill="#eee" stroke="#111"/><rect x="12" y="17" width="11" height="5" fill="#eee" stroke="#111"/></svg>
<svg class="a" style="left:1158px;top:646px;" width="28" height="28" viewBox="0 0 28 28"><path d="M1 2h26v18l-7 7H1z" fill="#efe070" stroke="#222"/><path d="M5 8h16M5 12h16M5 16h10" stroke="#222" stroke-width="2"/><path d="M20 27l1-7h6" fill="#c8b040"/></svg>
<svg class="a" style="left:1194px;top:646px;" width="32" height="28" viewBox="0 0 32 28"><path d="M3 10 L8 3 H24 L29 10 Z" fill="#f0b060" stroke="#8a5010"/><rect x="5" y="10" width="22" height="14" rx="2" fill="#e09840" stroke="#8a5010"/><rect x="5" y="13" width="22" height="3" fill="#c07020"/></svg>
<svg class="a" style="left:0;top:0" width="1682" height="1260"><path d="M1386.5 646 V674" stroke="#5f86c8" stroke-width="1.6"/><rect x="1381" y="649.5" width="11" height="5" fill="#eee" stroke="#111" stroke-width="1"/><rect x="1381" y="662.5" width="11" height="5" fill="#eee" stroke="#111" stroke-width="1"/><path d="M1409 660 H1437" stroke="#5f86c8" stroke-width="1" stroke-dasharray="1.5 1.5"/><rect x="1410" y="657" width="10" height="5" fill="#eee" stroke="#111" stroke-width="1"/><rect x="1425" y="657" width="10" height="5" fill="#eee" stroke="#111" stroke-width="1"/><path d="M1457 646 V673 M1461 646 V673" stroke="#5f86c8" stroke-width="1.6"/><rect x="1447" y="650" width="8" height="5" fill="#eee" stroke="#111" stroke-width="1"/><rect x="1464" y="664" width="8" height="5" fill="#eee" stroke="#111" stroke-width="1"/><path d="M1482 657 H1510 M1482 662.5 H1510" stroke="#5f86c8" stroke-width="1.8"/><rect x="1482" y="649" width="9" height="5" fill="#eee" stroke="#111" stroke-width="1"/><rect x="1498" y="664" width="9" height="5" fill="#eee" stroke="#111" stroke-width="1"/><path d="M1524 646 V673 M1531 646 V673 M1538 646 V673 M1518 652 H1545 M1518 659 H1545 M1518 666 H1545" stroke="#5f86c8" stroke-width="1.6"/><rect x="1519" y="650" width="8" height="4.5" fill="#eee" stroke="#111" stroke-width="1"/><rect x="1534" y="664" width="9" height="4.5" fill="#eee" stroke="#111" stroke-width="1"/><path d="M1560 646 V673 M1567 646 V673 M1574 646 V673 M1554 652 H1580 M1554 659 H1580 M1554 666 H1580" stroke="#5f86c8" stroke-width="1.6"/></svg>
<svg class="a" style="left:1603px;top:644px;" width="32" height="32" viewBox="0 0 32 32"><defs><radialGradient id="gmg" cx=".4" cy=".4" r=".6"><stop offset="0" stop-color="#8a9aa0"/><stop offset="1" stop-color="#30383c"/></radialGradient></defs><circle cx="15" cy="13" r="8.5" fill="url(#gmg)" stroke="#d8d8d8" stroke-width="3"/><path d="M21 19 L28 27" stroke="#d8d8d8" stroke-width="3.5" stroke-linecap="round"/></svg>
<svg class="a" style="left:1640px;top:645px;" width="30" height="30" viewBox="0 0 30 30"><rect x="2" y="2" width="25" height="26" fill="#eaeaea" stroke="#2a2a3a"/><rect x="3" y="3" width="23" height="3" fill="#999"/><path d="M4 17 Q15 7 26 17 Q15 24 4 17Z" fill="#fff" stroke="#222" stroke-width="1.2"/><path d="M7 11 Q15 5 24 10" stroke="#1a2040" stroke-width="2" fill="none"/><circle cx="16" cy="16.5" r="4.5" fill="#111"/></svg>
<div class="a" style="left:1322px;top:830px;width:52px;height:16px;background:#f3b812"></div>
<div class="a" style="left:1325px;top:833px;width:46px;height:14px;background:#8a8a8a;border:1px solid #555"></div>
<svg class="a" style="left:1344px;top:837px;" width="9" height="7" viewBox="0 0 9 7"><polygon points="0,0 9,0 4.5,7" fill="#000"/></svg>
<div class="a" style="left:1322px;top:899px;width:52px;height:16px;background:#f3b812"></div>
<div class="a" style="left:1325px;top:899px;width:46px;height:13px;background:#8a8a8a;border:1px solid #555"></div>
<svg class="a" style="left:1344px;top:902px;" width="9" height="7" viewBox="0 0 9 7"><polygon points="0,0 9,0 4.5,7" fill="#000"/></svg>
<div class="a" style="left:1243px;top:844px;width:210px;height:57px;background:#f3b812"></div>
<div class="a" style="left:1246px;top:847px;width:204px;height:51px;background:#333"></div>
<div class="a" style="left:1246px;top:847px;width:25px;height:51px;background:#66cc00"></div>
<div class="a" style="left:1272px;top:847px;width:152px;height:51px;background:linear-gradient(#9c9c9c,#c8c8c8)"></div>
<div class="a" style="left:1425px;top:847px;width:25px;height:51px;background:#0a64d0"></div>
<svg class="a" style="left:1251px;top:864px;" width="16" height="18" viewBox="0 0 16 18"><path d="M3 2 L3 14 L6 11 L9 16 L11 15 L8 10 L13 10 Z" fill="#58b010" stroke="#3a8a00" stroke-width="1"/></svg>
<svg class="a" style="left:1428px;top:862px;" width="20" height="18" viewBox="0 0 20 18"><path d="M3 6 Q10 0 17 6" fill="none" stroke="#2a5aa8" stroke-width="1.5"/><path d="M2 11 Q10 4 18 11 Q10 17 2 11Z" fill="none" stroke="#2a5aa8" stroke-width="1.6"/><circle cx="10" cy="11" r="2.8" fill="#2a5aa8"/></svg>
<svg class="a" style="left:1325px;top:852px;" width="44" height="40" viewBox="0 0 44 40"><defs><linearGradient id="nc" x1="0" x2="1"><stop offset="0" stop-color="#7aa0d0"/><stop offset=".35" stop-color="#c0d8f0"/><stop offset=".6" stop-color="#3a6aa8"/><stop offset="1" stop-color="#1a3a70"/></linearGradient><radialGradient id="ns" cx=".4" cy=".35" r=".7"><stop offset="0" stop-color="#f0a090"/><stop offset=".5" stop-color="#c83020"/><stop offset="1" stop-color="#701008"/></radialGradient><linearGradient id="ny" x1="0" x2="1"><stop offset="0" stop-color="#f8f0b0"/><stop offset=".5" stop-color="#e8d040"/><stop offset="1" stop-color="#a88a10"/></linearGradient></defs><path d="M3.5 5 L3.5 26 A8.5 4 0 0 0 20.5 26 L20.5 5 Z" fill="url(#nc)" stroke="#1a2a50" stroke-width=".8"/><ellipse cx="12" cy="5" rx="8.5" ry="3.5" fill="#d8e8f8" stroke="#1a2a50" stroke-width=".8"/><circle cx="32" cy="21" r="8.5" fill="url(#ns)" stroke="#4a1010" stroke-width=".6"/><path d="M23.8 16 L13 34 Q23 39 34 34 Z" fill="url(#ny)" stroke="#6a5a10" stroke-width=".6"/></svg>
<div class="t" style="left:1455px;top:857.5px;font-size:29px;color:#d8d8d8;letter-spacing:2.12px;">geo1</div>
</body></html>
